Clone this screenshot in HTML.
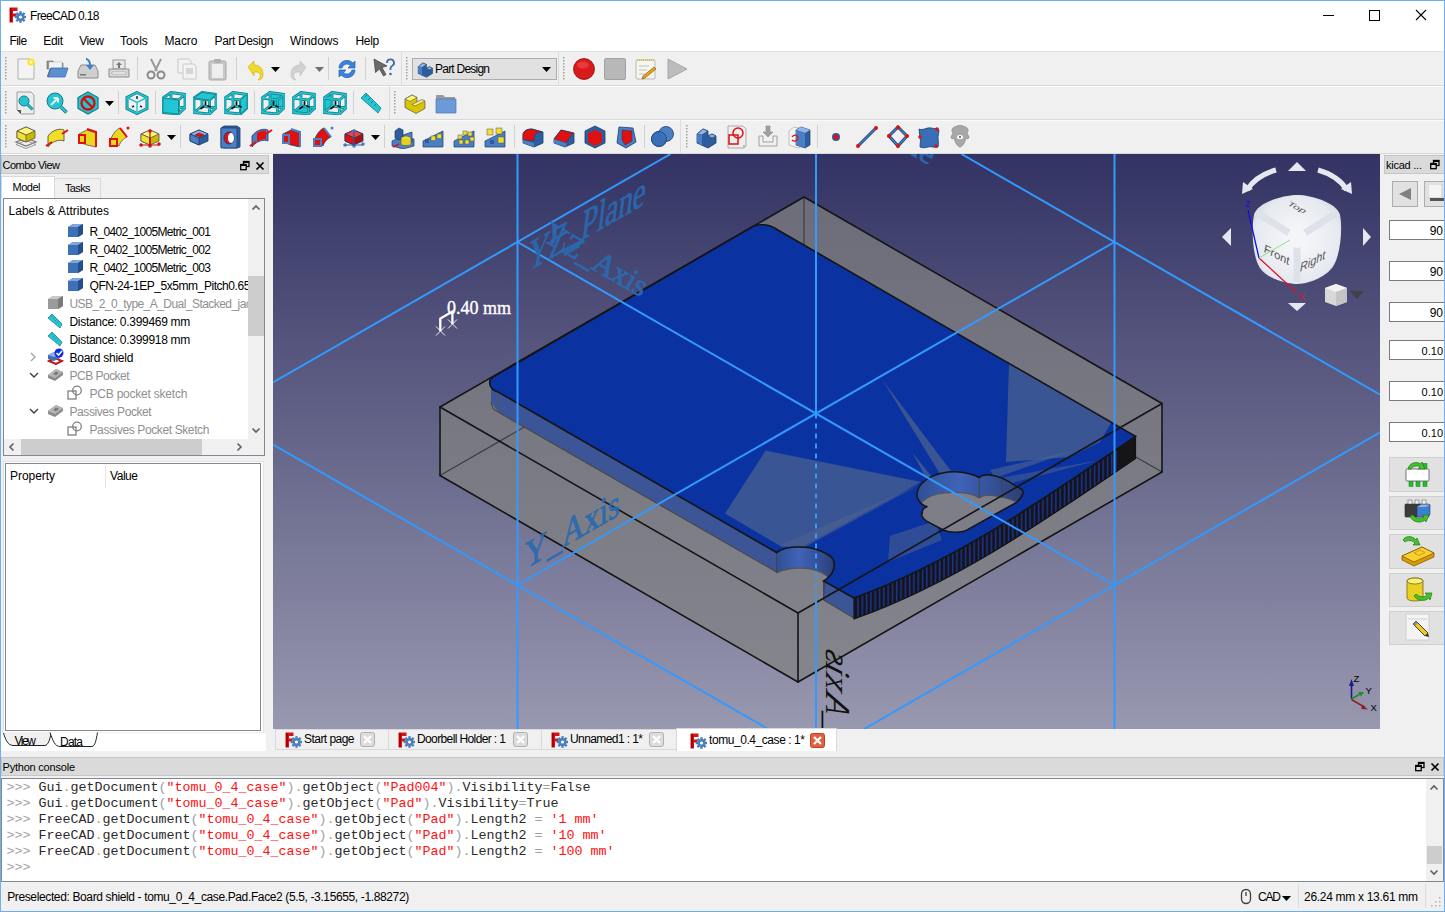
<!DOCTYPE html><html><head><meta charset="utf-8"><title>FreeCAD 0.18</title><style>
html,body{margin:0;padding:0}
body{width:1445px;height:912px;overflow:hidden;position:relative;background:#f0f0f0;font-family:"Liberation Sans",sans-serif;font-size:12px;color:#000}
svg{font-family:"Liberation Sans",sans-serif}
body>div{position:absolute;box-sizing:border-box}
.t{white-space:pre}
svg.tx{position:absolute;left:0;top:0;overflow:visible}
svg text{white-space:pre}
</style></head><body>
<div style="left:0px;top:0px;width:1445px;height:51px;background:#fff"></div>
<div style="left:0px;top:51px;width:1445px;height:1px;background:#e3e3e3"></div>
<svg style="position:absolute;left:9px;top:7px;" width="17" height="16" viewBox="0 0 17 16"><path d="M0.5 0.5h8v3.5h-4.5v2.5h3.5v3h-3.5v6h-3.5z" fill="#d3151b"/><path d="M1 1h2v14h-2z" fill="#a00"/><g transform="translate(11.5,10)"><circle r="4" fill="#4a7fc0"/><circle r="1.6" fill="#fff"/><rect x="-1.2" y="-5.8" width="2.4" height="2.6" fill="#4a7fc0" transform="rotate(0)"/><rect x="-1.2" y="-5.8" width="2.4" height="2.6" fill="#4a7fc0" transform="rotate(45)"/><rect x="-1.2" y="-5.8" width="2.4" height="2.6" fill="#4a7fc0" transform="rotate(90)"/><rect x="-1.2" y="-5.8" width="2.4" height="2.6" fill="#4a7fc0" transform="rotate(135)"/><rect x="-1.2" y="-5.8" width="2.4" height="2.6" fill="#4a7fc0" transform="rotate(180)"/><rect x="-1.2" y="-5.8" width="2.4" height="2.6" fill="#4a7fc0" transform="rotate(225)"/><rect x="-1.2" y="-5.8" width="2.4" height="2.6" fill="#4a7fc0" transform="rotate(270)"/><rect x="-1.2" y="-5.8" width="2.4" height="2.6" fill="#4a7fc0" transform="rotate(315)"/></g></svg>
<svg class="tx" width="1" height="1"><text x="30" y="20" font-size="12" fill="#000" textLength="69.5" lengthAdjust="spacing" >FreeCAD 0.18</text></svg>
<svg style="position:absolute;left:1318px;top:5px;" width="110" height="20" viewBox="0 0 110 20"><path d="M5 10.5h11" stroke="#000" stroke-width="1"/><rect x="51.5" y="5.5" width="10" height="10" fill="none" stroke="#000"/><path d="M98 5l10 10M108 5l-10 10" stroke="#000" stroke-width="1.1"/></svg>
<svg class="tx" width="1" height="1"><text x="9.5" y="45" font-size="12" fill="#000" textLength="17.6" lengthAdjust="spacing" >File</text></svg>
<svg class="tx" width="1" height="1"><text x="43.3" y="45" font-size="12" fill="#000" textLength="19.7" lengthAdjust="spacing" >Edit</text></svg>
<svg class="tx" width="1" height="1"><text x="79.2" y="45" font-size="12" fill="#000" textLength="24.6" lengthAdjust="spacing" >View</text></svg>
<svg class="tx" width="1" height="1"><text x="120.1" y="45" font-size="12" fill="#000" textLength="27.7" lengthAdjust="spacing" >Tools</text></svg>
<svg class="tx" width="1" height="1"><text x="164.4" y="45" font-size="12" fill="#000" textLength="33" lengthAdjust="spacing" >Macro</text></svg>
<svg class="tx" width="1" height="1"><text x="214.5" y="45" font-size="12" fill="#000" textLength="59" lengthAdjust="spacing" >Part Design</text></svg>
<svg class="tx" width="1" height="1"><text x="290" y="45" font-size="12" fill="#000" textLength="48.4" lengthAdjust="spacing" >Windows</text></svg>
<svg class="tx" width="1" height="1"><text x="355.5" y="45" font-size="12" fill="#000" textLength="23.7" lengthAdjust="spacing" >Help</text></svg>
<div style="left:0px;top:85px;width:1445px;height:1px;background:#d9d9d9"></div>
<div style="left:0px;top:86px;width:1445px;height:1px;background:#fafafa"></div>
<div style="left:0px;top:119px;width:1445px;height:1px;background:#d9d9d9"></div>
<div style="left:0px;top:120px;width:1445px;height:1px;background:#fafafa"></div>
<div style="left:0px;top:153px;width:1445px;height:1px;background:#d9d9d9"></div>
<div style="left:0px;top:154px;width:1445px;height:1px;background:#fafafa"></div>
<svg style="position:absolute;left:5px;top:57px;" width="2" height="24" viewBox="0 0 2 24"><rect x="0" y="0" width="1.5" height="1.5" fill="#a0a0a0"/><rect x="0" y="3" width="1.5" height="1.5" fill="#a0a0a0"/><rect x="0" y="6" width="1.5" height="1.5" fill="#a0a0a0"/><rect x="0" y="9" width="1.5" height="1.5" fill="#a0a0a0"/><rect x="0" y="12" width="1.5" height="1.5" fill="#a0a0a0"/><rect x="0" y="15" width="1.5" height="1.5" fill="#a0a0a0"/><rect x="0" y="18" width="1.5" height="1.5" fill="#a0a0a0"/><rect x="0" y="21" width="1.5" height="1.5" fill="#a0a0a0"/></svg>
<svg style="position:absolute;left:14px;top:57px;" width="24" height="24" viewBox="0 0 24 24"><path d="M4 2h12l4 4v16H4z" fill="#f4f4f4" stroke="#b0b0b0"/><circle cx="17" cy="5" r="3.5" fill="#ffe100" opacity="0.9"/><circle cx="17" cy="5" r="1.8" fill="#fffbc0"/></svg>
<svg style="position:absolute;left:45px;top:57px;" width="24" height="24" viewBox="0 0 24 24"><path d="M2 4h6l2 2h8v6H2z" fill="#8c8c8c" stroke="#6a6a6a" stroke-width="0.6"/><path d="M4 5h13v9H4z" fill="#f2f2f2" stroke="#bbb" stroke-width="0.5"/><path d="M2 4v15l3-8h18l-4 9H2z" fill="#6c6c6c"/><path d="M3 20l3-9h17l-3 9z" fill="#5b8fd0" stroke="#3d6eb0" stroke-width="0.8"/></svg>
<svg style="position:absolute;left:76px;top:57px;" width="24" height="24" viewBox="0 0 24 24"><path d="M2 14l3-6h14l3 6v7H2z" fill="#cfcfcf" stroke="#8a8a8a"/><rect x="4" y="17" width="6" height="1.5" fill="#777"/><path d="M12 3c-5 0-7 3-7 5h2c0-1.5 2-3 5-3v3l5-4-5-4z" fill="#3f7fd0" transform="rotate(90 12 8) translate(0,2)"/></svg>
<svg style="position:absolute;left:107px;top:57px;" width="24" height="24" viewBox="0 0 24 24"><rect x="6" y="3" width="12" height="9" fill="#e8e8e8" stroke="#999"/><path d="M12 5l-3 3h2v3h2V8h2z" fill="#777"/><path d="M2 12h20v8H2z" fill="#d8d8d8" stroke="#8c8c8c"/><rect x="5" y="15" width="14" height="2" fill="#fff" stroke="#999" stroke-width="0.6"/></svg>
<svg style="position:absolute;left:144px;top:57px;" width="24" height="24" viewBox="0 0 24 24"><path d="M7 2l6 12M17 2l-6 12" stroke="#9a9a9a" stroke-width="2"/><circle cx="7" cy="18" r="3.5" fill="none" stroke="#8a8a8a" stroke-width="2"/><circle cx="17" cy="18" r="3.5" fill="none" stroke="#8a8a8a" stroke-width="2"/></svg>
<svg style="position:absolute;left:175px;top:57px;" width="24" height="24" viewBox="0 0 24 24"><path d="M3 2h11l2 2v12H3z" fill="#f3f3f3" stroke="#c8c8c8"/><path d="M8 7h11l2 2v13H8z" fill="#f3f3f3" stroke="#c8c8c8"/><rect x="11" y="11" width="7" height="6" fill="#d5d5d5"/></svg>
<svg style="position:absolute;left:206px;top:57px;" width="24" height="24" viewBox="0 0 24 24"><rect x="3" y="4" width="17" height="19" rx="1.5" fill="#c8c8c8" stroke="#a8a8a8"/><rect x="6" y="7" width="11" height="14" fill="#eeeeee"/><rect x="8" y="2" width="7" height="4" rx="1" fill="#b0b0b0"/></svg>
<svg style="position:absolute;left:243px;top:57px;" width="24" height="24" viewBox="0 0 24 24"><path d="M5 10l6-6v4c6 0 9 4 9 9s-3 6-5 6c2-2 3-4 2-6-1-2-3-2-6-2v4z" fill="#f0d830" stroke="#c8b000" stroke-width="0.6"/></svg>
<svg style="position:absolute;left:287px;top:57px;" width="24" height="24" viewBox="0 0 24 24"><path d="M19 10l-6-6v4c-6 0-9 4-9 9s3 6 5 6c-2-2-3-4-2-6 1-2 3-2 6-2v4z" fill="#d0d0d0" stroke="#c0c0c0" stroke-width="0.6"/></svg>
<svg style="position:absolute;left:335px;top:57px;" width="24" height="24" viewBox="0 0 24 24"><path d="M4 11a8 8 0 0 1 14-5l2-2v7h-7l2.5-2.5A5 5 0 0 0 7 11z" fill="#3a83d8" stroke="#2563b0" stroke-width="0.7"/><path d="M20 13a8 8 0 0 1-14 5l-2 2v-7h7l-2.5 2.5A5 5 0 0 0 17 13z" fill="#3a83d8" stroke="#2563b0" stroke-width="0.7"/></svg>
<svg style="position:absolute;left:372px;top:57px;" width="24" height="24" viewBox="0 0 24 24"><path d="M2 2l13 7-5 1.5 4 7-2.5 1.5-4-7-4 3.5z" fill="#6a6a6a" stroke="#404040" stroke-width="0.7"/><path d="M15 6a3.5 3.5 0 1 1 5 3c-1 .7-1.5 1.3-1.5 2.5v1.5" fill="none" stroke="#3c6eb0" stroke-width="1.8"/><circle cx="18.5" cy="17" r="1.3" fill="#3c6eb0"/></svg>
<div style="left:137px;top:57px;width:1px;height:23px;background:#d0d0d0"></div>
<div style="left:236px;top:57px;width:1px;height:23px;background:#d0d0d0"></div>
<div style="left:328px;top:57px;width:1px;height:23px;background:#d0d0d0"></div>
<div style="left:365px;top:57px;width:1px;height:23px;background:#d0d0d0"></div>
<svg style="position:absolute;left:271px;top:67px" width="9" height="5" viewBox="0 0 9 5"><path d="M0 0h9l-4.5 5z" fill="#000"/></svg>
<svg style="position:absolute;left:315px;top:67px" width="9" height="5" viewBox="0 0 9 5"><path d="M0 0h9l-4.5 5z" fill="#707070"/></svg>
<div style="left:401px;top:52px;width:1px;height:33px;background:#dcdcdc"></div>
<svg style="position:absolute;left:406px;top:57px;" width="2" height="24" viewBox="0 0 2 24"><rect x="0" y="0" width="1.5" height="1.5" fill="#a0a0a0"/><rect x="0" y="3" width="1.5" height="1.5" fill="#a0a0a0"/><rect x="0" y="6" width="1.5" height="1.5" fill="#a0a0a0"/><rect x="0" y="9" width="1.5" height="1.5" fill="#a0a0a0"/><rect x="0" y="12" width="1.5" height="1.5" fill="#a0a0a0"/><rect x="0" y="15" width="1.5" height="1.5" fill="#a0a0a0"/><rect x="0" y="18" width="1.5" height="1.5" fill="#a0a0a0"/><rect x="0" y="21" width="1.5" height="1.5" fill="#a0a0a0"/></svg>
<div style="left:412px;top:58px;width:145px;height:22px;background:#e1e1e1;border:1px solid #adadad"></div>
<svg style="position:absolute;left:416px;top:60px;" width="18" height="18" viewBox="0 0 24 24"><path d="M3 9l6-5 5 2v5l4-2 4 2v7l-8 5-11-5z" fill="#2d5d9f" stroke="#1c3c6c" stroke-width="0.8"/><path d="M3 9l6-5 5 2-6 4zM14 11l4-2 4 2-4 2z" fill="#8fb4e6" stroke="#1c3c6c" stroke-width="0.6"/><path d="M3 9l5 1v11l-5-4z" fill="#4a7fc4"/></svg>
<svg class="tx" width="1" height="1"><text x="435" y="73" font-size="12" fill="#000" textLength="55" lengthAdjust="spacing" >Part Design</text></svg>
<svg style="position:absolute;left:542px;top:67px" width="9" height="5" viewBox="0 0 9 5"><path d="M0 0h9l-4.5 5z" fill="#000"/></svg>
<div style="left:558px;top:52px;width:1px;height:33px;background:#dcdcdc"></div>
<svg style="position:absolute;left:563px;top:57px;" width="2" height="24" viewBox="0 0 2 24"><rect x="0" y="0" width="1.5" height="1.5" fill="#a0a0a0"/><rect x="0" y="3" width="1.5" height="1.5" fill="#a0a0a0"/><rect x="0" y="6" width="1.5" height="1.5" fill="#a0a0a0"/><rect x="0" y="9" width="1.5" height="1.5" fill="#a0a0a0"/><rect x="0" y="12" width="1.5" height="1.5" fill="#a0a0a0"/><rect x="0" y="15" width="1.5" height="1.5" fill="#a0a0a0"/><rect x="0" y="18" width="1.5" height="1.5" fill="#a0a0a0"/><rect x="0" y="21" width="1.5" height="1.5" fill="#a0a0a0"/></svg>
<svg style="position:absolute;left:572px;top:57px;" width="24" height="24" viewBox="0 0 24 24"><circle cx="12" cy="12" r="10.5" fill="#d91a1a" stroke="#8a0c0c" stroke-width="0.8"/><ellipse cx="11" cy="8" rx="6" ry="3.5" fill="#f05050" opacity="0.6"/></svg>
<svg style="position:absolute;left:603px;top:57px;" width="24" height="24" viewBox="0 0 24 24"><rect x="1.5" y="1.5" width="21" height="21" rx="1.5" fill="#b8b8b8" stroke="#a0a0a0"/></svg>
<svg style="position:absolute;left:634px;top:57px;" width="24" height="24" viewBox="0 0 24 24"><rect x="2" y="3" width="19" height="19" rx="1" fill="#f6f6f0" stroke="#b8b8b0"/><path d="M3 3h17" stroke="#d8c050" stroke-width="2" stroke-dasharray="1,1"/><path d="M5 9h10M5 13h8M5 17h6" stroke="#c0c0c0"/><path d="M9 19l11-9 2 2-11 9-3 1z" fill="#e8a020" stroke="#8a5000" stroke-width="0.6"/></svg>
<svg style="position:absolute;left:665px;top:57px;" width="24" height="24" viewBox="0 0 24 24"><path d="M3 2l19 10-19 10z" fill="#bcbcbc" stroke="#a8a8a8"/></svg>
<svg style="position:absolute;left:5px;top:91px;" width="2" height="24" viewBox="0 0 2 24"><rect x="0" y="0" width="1.5" height="1.5" fill="#a0a0a0"/><rect x="0" y="3" width="1.5" height="1.5" fill="#a0a0a0"/><rect x="0" y="6" width="1.5" height="1.5" fill="#a0a0a0"/><rect x="0" y="9" width="1.5" height="1.5" fill="#a0a0a0"/><rect x="0" y="12" width="1.5" height="1.5" fill="#a0a0a0"/><rect x="0" y="15" width="1.5" height="1.5" fill="#a0a0a0"/><rect x="0" y="18" width="1.5" height="1.5" fill="#a0a0a0"/><rect x="0" y="21" width="1.5" height="1.5" fill="#a0a0a0"/></svg>
<svg style="position:absolute;left:14px;top:91px;" width="24" height="24" viewBox="0 0 24 24"><path d="M3 1h14l3 3v19H7l-4-4z" fill="#ececec" stroke="#8a8a8a" stroke-width="0.8"/><path d="M3 19l4 4v-4z" fill="#555"/><circle cx="10" cy="10" r="5" fill="#22c6d2" stroke="#137c86"/><path d="M13.5 13.5l5 5" stroke="#137c86" stroke-width="3"/><path d="M13.5 13.5l5 5" stroke="#22c6d2" stroke-width="1.6"/></svg>
<svg style="position:absolute;left:45px;top:91px;" width="24" height="24" viewBox="0 0 24 24"><circle cx="10" cy="10" r="8" fill="#22c6d2" stroke="#137c86"/><path d="M15.5 15.5l6 6" stroke="#137c86" stroke-width="3.5"/><path d="M15.5 15.5l6 6" stroke="#22c6d2" stroke-width="2"/><path d="M6 14l7-7M13 7h-4.5M13 7v4.5" stroke="#eee" stroke-width="2"/></svg>
<svg style="position:absolute;left:76px;top:91px;" width="24" height="24" viewBox="0 0 24 24"><path d="M12 1l10 5.5v11L12 23 2 17.5v-11z" fill="#22c6d2" stroke="#137c86" stroke-width="1.2"/><circle cx="12" cy="12" r="6.5" fill="none" stroke="#d01010" stroke-width="2.3"/><path d="M7.5 7.5l9 9" stroke="#d01010" stroke-width="2.3"/></svg>
<svg style="position:absolute;left:125px;top:91px;" width="24" height="24" viewBox="0 0 24 24"><path d="M12 1.5l10 5v11l-10 5-10-5v-11z" fill="none" stroke="#137c86" stroke-width="3"/><path d="M12 1.5l10 5v11l-10 5-10-5v-11zM2 6.5l10 5 10-5M12 11.5v11" fill="none" stroke="#22c6d2" stroke-width="1.4"/><path d="M12 5v3M7 16l2-1M17 16l-2-1" stroke="#222" stroke-width="1.5"/></svg>
<svg style="position:absolute;left:162px;top:91px;" width="24" height="24" viewBox="0 0 24 24"><path d="M1,7 L16.5,9 L16.5,23 L1,21.5 Z M9,1.5 L23,3.5 L23,17 L9,15 Z M1,7 L9,1.5 M16.5,9 L23,3.5 M16.5,23 L23,17 M1,21.5 L9,15" fill="none" stroke="#137c86" stroke-width="2.8" stroke-linejoin="round"/><path d="M1,7 L16.5,9 L16.5,23 L1,21.5 Z M9,1.5 L23,3.5 L23,17 L9,15 Z M1,7 L9,1.5 M16.5,9 L23,3.5 M16.5,23 L23,17 M1,21.5 L9,15" fill="none" stroke="#22c6d2" stroke-width="1.4" stroke-linejoin="round"/><polygon points="1,7 16.5,9 16.5,23 1,21.5" fill="#22c6d2" stroke="#137c86" stroke-width="0.8"/></svg>
<svg style="position:absolute;left:193px;top:91px;" width="24" height="24" viewBox="0 0 24 24"><path d="M1,7 L16.5,9 L16.5,23 L1,21.5 Z M9,1.5 L23,3.5 L23,17 L9,15 Z M1,7 L9,1.5 M16.5,9 L23,3.5 M16.5,23 L23,17 M1,21.5 L9,15" fill="none" stroke="#137c86" stroke-width="2.8" stroke-linejoin="round"/><path d="M1,7 L16.5,9 L16.5,23 L1,21.5 Z M9,1.5 L23,3.5 L23,17 L9,15 Z M1,7 L9,1.5 M16.5,9 L23,3.5 M16.5,23 L23,17 M1,21.5 L9,15" fill="none" stroke="#22c6d2" stroke-width="1.4" stroke-linejoin="round"/><polygon points="1,7 16.5,9 23,3.5 9,1.5" fill="#22c6d2" stroke="#137c86" stroke-width="0.8"/><path d="M12.5 11v2.5M8 17.5l2.5-1.8M15 15l2 0.8" stroke="#111" stroke-width="1.8" stroke-linecap="round"/></svg>
<svg style="position:absolute;left:224px;top:91px;" width="24" height="24" viewBox="0 0 24 24"><path d="M1,7 L16.5,9 L16.5,23 L1,21.5 Z M9,1.5 L23,3.5 L23,17 L9,15 Z M1,7 L9,1.5 M16.5,9 L23,3.5 M16.5,23 L23,17 M1,21.5 L9,15" fill="none" stroke="#137c86" stroke-width="2.8" stroke-linejoin="round"/><path d="M1,7 L16.5,9 L16.5,23 L1,21.5 Z M9,1.5 L23,3.5 L23,17 L9,15 Z M1,7 L9,1.5 M16.5,9 L23,3.5 M16.5,23 L23,17 M1,21.5 L9,15" fill="none" stroke="#22c6d2" stroke-width="1.4" stroke-linejoin="round"/><polygon points="16.5,9 23,3.5 23,17 16.5,23" fill="#22c6d2" stroke="#137c86" stroke-width="0.8"/><path d="M12.5 11v2.5M8 17.5l2.5-1.8M15 15l2 0.8" stroke="#111" stroke-width="1.8" stroke-linecap="round"/></svg>
<svg style="position:absolute;left:261px;top:91px;" width="24" height="24" viewBox="0 0 24 24"><polygon points="9,1.5 23,3.5 23,17 9,15" fill="#22c6d2"/><path d="M1,7 L16.5,9 L16.5,23 L1,21.5 Z M9,1.5 L23,3.5 L23,17 L9,15 Z M1,7 L9,1.5 M16.5,9 L23,3.5 M16.5,23 L23,17 M1,21.5 L9,15" fill="none" stroke="#137c86" stroke-width="2.8" stroke-linejoin="round"/><path d="M1,7 L16.5,9 L16.5,23 L1,21.5 Z M9,1.5 L23,3.5 L23,17 L9,15 Z M1,7 L9,1.5 M16.5,9 L23,3.5 M16.5,23 L23,17 M1,21.5 L9,15" fill="none" stroke="#22c6d2" stroke-width="1.4" stroke-linejoin="round"/><path d="M12.5 11v2.5M8 17.5l2.5-1.8M15 15l2 0.8" stroke="#111" stroke-width="1.8" stroke-linecap="round"/></svg>
<svg style="position:absolute;left:292px;top:91px;" width="24" height="24" viewBox="0 0 24 24"><polygon points="1,21.5 16.5,23 23,17 9,15" fill="#22c6d2"/><path d="M1,7 L16.5,9 L16.5,23 L1,21.5 Z M9,1.5 L23,3.5 L23,17 L9,15 Z M1,7 L9,1.5 M16.5,9 L23,3.5 M16.5,23 L23,17 M1,21.5 L9,15" fill="none" stroke="#137c86" stroke-width="2.8" stroke-linejoin="round"/><path d="M1,7 L16.5,9 L16.5,23 L1,21.5 Z M9,1.5 L23,3.5 L23,17 L9,15 Z M1,7 L9,1.5 M16.5,9 L23,3.5 M16.5,23 L23,17 M1,21.5 L9,15" fill="none" stroke="#22c6d2" stroke-width="1.4" stroke-linejoin="round"/><path d="M12.5 11v2.5M8 17.5l2.5-1.8M15 15l2 0.8" stroke="#111" stroke-width="1.8" stroke-linecap="round"/></svg>
<svg style="position:absolute;left:323px;top:91px;" width="24" height="24" viewBox="0 0 24 24"><polygon points="1,7 9,1.5 9,15 1,21.5" fill="#22c6d2"/><path d="M1,7 L16.5,9 L16.5,23 L1,21.5 Z M9,1.5 L23,3.5 L23,17 L9,15 Z M1,7 L9,1.5 M16.5,9 L23,3.5 M16.5,23 L23,17 M1,21.5 L9,15" fill="none" stroke="#137c86" stroke-width="2.8" stroke-linejoin="round"/><path d="M1,7 L16.5,9 L16.5,23 L1,21.5 Z M9,1.5 L23,3.5 L23,17 L9,15 Z M1,7 L9,1.5 M16.5,9 L23,3.5 M16.5,23 L23,17 M1,21.5 L9,15" fill="none" stroke="#22c6d2" stroke-width="1.4" stroke-linejoin="round"/><path d="M12.5 11v2.5M8 17.5l2.5-1.8M15 15l2 0.8" stroke="#111" stroke-width="1.8" stroke-linecap="round"/></svg>
<svg style="position:absolute;left:359px;top:91px;" width="24" height="24" viewBox="0 0 24 24"><path d="M2 7l5-5 15 15-3 5z" fill="#22c6d2" stroke="#137c86" stroke-width="0.8"/><path d="M6 6l2-2M9 9l2-2M12 12l2-2M15 15l2-2" stroke="#137c86"/></svg>
<svg style="position:absolute;left:105px;top:101px" width="9" height="5" viewBox="0 0 9 5"><path d="M0 0h9l-4.5 5z" fill="#000"/></svg>
<div style="left:118px;top:91px;width:1px;height:23px;background:#d0d0d0"></div>
<div style="left:155px;top:91px;width:1px;height:23px;background:#d0d0d0"></div>
<div style="left:254px;top:91px;width:1px;height:23px;background:#d0d0d0"></div>
<div style="left:353px;top:91px;width:1px;height:23px;background:#d0d0d0"></div>
<div style="left:389px;top:86px;width:1px;height:33px;background:#dcdcdc"></div>
<svg style="position:absolute;left:394px;top:91px;" width="2" height="24" viewBox="0 0 2 24"><rect x="0" y="0" width="1.5" height="1.5" fill="#a0a0a0"/><rect x="0" y="3" width="1.5" height="1.5" fill="#a0a0a0"/><rect x="0" y="6" width="1.5" height="1.5" fill="#a0a0a0"/><rect x="0" y="9" width="1.5" height="1.5" fill="#a0a0a0"/><rect x="0" y="12" width="1.5" height="1.5" fill="#a0a0a0"/><rect x="0" y="15" width="1.5" height="1.5" fill="#a0a0a0"/><rect x="0" y="18" width="1.5" height="1.5" fill="#a0a0a0"/><rect x="0" y="21" width="1.5" height="1.5" fill="#a0a0a0"/></svg>
<svg style="position:absolute;left:403px;top:91px;" width="24" height="24" viewBox="0 0 24 24"><path d="M2 8l7-4 5 2.5v5l5-2.5 3 1.5v7l-9 5-11-6z" fill="#d8c400" stroke="#555" stroke-width="0.7"/><path d="M2 8l7-4 5 2.5-7 4z" fill="#fff27a" stroke="#555" stroke-width="0.6"/><path d="M9 13.5l10-5 3 1.5-10 5z" fill="#fff27a" stroke="#555" stroke-width="0.6"/></svg>
<svg style="position:absolute;left:434px;top:91px;" width="24" height="24" viewBox="0 0 24 24"><path d="M2 4h7l2 2h10v15H2z" fill="#9a9a9a"/><path d="M2 8h20v14H2z" fill="#6c9ad8" stroke="#4c7ab8" stroke-width="0.7"/></svg>
<svg style="position:absolute;left:5px;top:125px;" width="2" height="24" viewBox="0 0 2 24"><rect x="0" y="0" width="1.5" height="1.5" fill="#a0a0a0"/><rect x="0" y="3" width="1.5" height="1.5" fill="#a0a0a0"/><rect x="0" y="6" width="1.5" height="1.5" fill="#a0a0a0"/><rect x="0" y="9" width="1.5" height="1.5" fill="#a0a0a0"/><rect x="0" y="12" width="1.5" height="1.5" fill="#a0a0a0"/><rect x="0" y="15" width="1.5" height="1.5" fill="#a0a0a0"/><rect x="0" y="18" width="1.5" height="1.5" fill="#a0a0a0"/><rect x="0" y="21" width="1.5" height="1.5" fill="#a0a0a0"/></svg>
<svg style="position:absolute;left:14px;top:125px;" width="24" height="24" viewBox="0 0 24 24"><path d="M2 17l10-4 10 4-10 4z" fill="none" stroke="#777" stroke-width="1.2"/><path d="M2 19.5l10-4 10 4-10 4z" fill="none" stroke="#999" stroke-width="1"/><g transform="translate(0,-3)"><path d="M3 9l9-4 9 4v7l-9 4-9-4z" fill="#c9b800" stroke="#555" stroke-width="0.8"/><path d="M3 9l9-4 9 4-9 4z" fill="#fff57a" stroke="#555" stroke-width="0.8"/><path d="M3 9l9 4v7l-9-4z" fill="#f2e230" stroke="#555" stroke-width="0.8"/></g></svg>
<svg style="position:absolute;left:45px;top:125px;" width="24" height="24" viewBox="0 0 24 24"><path d="M3 11c4-6 12-8 16-6v11c-4-2-12 0-16 6z" fill="#f0de28" stroke="#444" stroke-width="0.8"/><path d="M1 21l6-4M17 9l6-4" stroke="#e01010" stroke-width="2"/></svg>
<svg style="position:absolute;left:76px;top:125px;" width="24" height="24" viewBox="0 0 24 24"><path d="M3 9l8-4 9 3v14l-9-2-8-3z" fill="#e8d820" stroke="#555" stroke-width="0.8"/><rect x="3" y="10" width="6" height="8" fill="none" stroke="#e01010" stroke-width="2"/><path d="M11 4l9 3v15" fill="none" stroke="#e01010" stroke-width="2"/></svg>
<svg style="position:absolute;left:107px;top:125px;" width="24" height="24" viewBox="0 0 24 24"><path d="M4 14c2-6 6-10 9-11l7 9c-3 1-7 5-8 9z" fill="#e8d820" stroke="#555" stroke-width="0.8"/><path d="M13 3l7 9" stroke="#e01010" stroke-width="2"/><rect x="3" y="14" width="7" height="7" fill="#e8d820" stroke="#e01010" stroke-width="2"/><circle cx="21" cy="3" r="1.5" fill="#e01010"/></svg>
<svg style="position:absolute;left:138px;top:125px;" width="24" height="24" viewBox="0 0 24 24"><path d="M3 9l9-4 9 4v7l-9 4-9-4z" fill="#c9b800" stroke="#555" stroke-width="0.8"/><path d="M3 9l9-4 9 4-9 4z" fill="#fff57a" stroke="#555" stroke-width="0.8"/><path d="M3 9l9 4v7l-9-4z" fill="#f2e230" stroke="#555" stroke-width="0.8"/><path d="M12 13v7M12 13h0" stroke="#c01010" stroke-width="1.5"/><circle cx="12" cy="6" r="1.8" fill="#e01010"/><circle cx="3" cy="20" r="1.8" fill="#e01010"/><circle cx="12" cy="21" r="1.8" fill="#e01010"/><circle cx="21" cy="19" r="1.8" fill="#e01010"/><path d="M12 6v15M3 20h18" stroke="#c01010" stroke-width="1.2"/></svg>
<svg style="position:absolute;left:187px;top:125px;" width="24" height="24" viewBox="0 0 24 24"><path d="M3 9l9-4 9 4v7l-9 4-9-4z" fill="#2d5d9f" stroke="#1c3c6c" stroke-width="0.8"/><path d="M3 9l9-4 9 4-9 4z" fill="#8fb4e6" stroke="#1c3c6c" stroke-width="0.8"/><path d="M3 9l9 4v7l-9-4z" fill="#4a7fc4" stroke="#1c3c6c" stroke-width="0.8"/><path d="M8 10l4-2 5 2-4 2z" fill="#e01010" stroke="#900" stroke-width="0.6"/></svg>
<svg style="position:absolute;left:218px;top:125px;" width="24" height="24" viewBox="0 0 24 24"><path d="M3 3l3-2h13l3 2v19l-3 1H6l-3-1z" fill="#2d5d9f" stroke="#1c3c6c" stroke-width="0.8"/><path d="M3 3h16v20H3z" fill="#4a7fc4" stroke="#1c3c6c" stroke-width="0.8"/><ellipse cx="11" cy="13" rx="5" ry="6" fill="#e01010" stroke="#1c3c6c"/><ellipse cx="13" cy="13" rx="3" ry="5" fill="#fff"/></svg>
<svg style="position:absolute;left:249px;top:125px;" width="24" height="24" viewBox="0 0 24 24"><path d="M3 11c4-6 12-8 16-6v11c-4-2-12 0-16 6z" fill="#4a7fc4" stroke="#1c3c6c" stroke-width="0.8"/><path d="M8 8c3-2 7-3 9-2v8c-3 0-6 1-9 3z" fill="#e01010"/><path d="M1 21l6-4M17 9l6-4" stroke="#e01010" stroke-width="2"/></svg>
<svg style="position:absolute;left:280px;top:125px;" width="24" height="24" viewBox="0 0 24 24"><path d="M3 9l8-4 9 3v14l-9-2-8-3z" fill="#e01010" stroke="#1c3c6c" stroke-width="0.8"/><rect x="3" y="10" width="6" height="8" fill="#e01010" stroke="#4a7fc4" stroke-width="2"/><path d="M11 4l9 3v15" fill="none" stroke="#4a7fc4" stroke-width="2"/></svg>
<svg style="position:absolute;left:311px;top:125px;" width="24" height="24" viewBox="0 0 24 24"><path d="M4 14c2-6 6-10 9-11l7 9c-3 1-7 5-8 9z" fill="#e01010" stroke="#1c3c6c" stroke-width="0.8"/><path d="M13 3l7 9" stroke="#4a7fc4" stroke-width="2"/><rect x="3" y="14" width="7" height="7" fill="#e01010" stroke="#4a7fc4" stroke-width="2"/><circle cx="21" cy="3" r="1.5" fill="#4a7fc4"/></svg>
<svg style="position:absolute;left:342px;top:125px;" width="24" height="24" viewBox="0 0 24 24"><path d="M3 9l9-4 9 4v7l-9 4-9-4z" fill="#b00c0c" stroke="#1c3c6c" stroke-width="0.8"/><path d="M3 9l9-4 9 4-9 4z" fill="#f04040" stroke="#1c3c6c" stroke-width="0.8"/><path d="M3 9l9 4v7l-9-4z" fill="#e01010" stroke="#1c3c6c" stroke-width="0.8"/><circle cx="12" cy="6" r="1.8" fill="#4a7fc4"/><circle cx="3" cy="20" r="1.8" fill="#4a7fc4"/><circle cx="12" cy="21" r="1.8" fill="#4a7fc4"/><circle cx="21" cy="19" r="1.8" fill="#4a7fc4"/><path d="M12 6v15M3 20h18" stroke="#2d5d9f" stroke-width="1.2"/></svg>
<svg style="position:absolute;left:391px;top:125px;" width="24" height="24" viewBox="0 0 24 24"><path d="M1 16l10-5 12 3v7l-11 3-11-3z" fill="#4a7fc4" stroke="#1c3c6c" stroke-width="0.7"/><path d="M4 6l4-3 4 2v8l-4 2-4-2z" fill="#2d5d9f" stroke="#1c3c6c" stroke-width="0.7"/><path d="M12 10l9-3v10l-9 3z" fill="#4a7fc4" stroke="#1c3c6c" stroke-width="0.7"/><ellipse cx="15" cy="14" rx="5" ry="3" fill="#f0de28" stroke="#555" stroke-width="0.6"/><path d="M10 14v5c0 2 10 2 10 0v-5" fill="#e8d020" stroke="#555" stroke-width="0.6"/><path d="M2 22l6-3" stroke="#e01010" stroke-width="1.5"/></svg>
<svg style="position:absolute;left:422px;top:125px;" width="24" height="24" viewBox="0 0 24 24"><path d="M1 16l20-10v16H1z" fill="#4a7fc4" stroke="#1c3c6c" stroke-width="0.7"/><rect x="3" y="14" width="4" height="4" fill="#2d5d9f"/><rect x="9" y="11" width="4.5" height="4.5" fill="#f0de28" stroke="#555" stroke-width="0.5"/><rect x="15" y="9" width="4.5" height="4.5" fill="#f0de28" stroke="#555" stroke-width="0.5"/></svg>
<svg style="position:absolute;left:453px;top:125px;" width="24" height="24" viewBox="0 0 24 24"><path d="M1 16l20-10v16H1z" fill="#4a7fc4" stroke="#1c3c6c" stroke-width="0.7"/><rect x="5" y="10" width="4" height="4" fill="#f0de28" stroke="#555" stroke-width="0.5"/><rect x="10" y="6" width="4" height="4" fill="#f0de28" stroke="#555" stroke-width="0.5"/><rect x="15" y="7" width="4" height="4" fill="#f0de28" stroke="#555" stroke-width="0.5"/><rect x="17" y="12" width="4" height="4" fill="#f0de28" stroke="#555" stroke-width="0.5"/><rect x="12" y="15" width="4" height="4" fill="#f0de28" stroke="#555" stroke-width="0.5"/><rect x="6" y="15" width="4" height="4" fill="#f0de28" stroke="#555" stroke-width="0.5"/></svg>
<svg style="position:absolute;left:484px;top:125px;" width="24" height="24" viewBox="0 0 24 24"><path d="M1 16l20-10v16H1z" fill="#4a7fc4" stroke="#1c3c6c" stroke-width="0.7"/><rect x="3" y="4" width="6" height="6" fill="#f0de28" stroke="#555" stroke-width="0.5"/><rect x="12" y="3" width="6" height="6" fill="#f0de28" stroke="#555" stroke-width="0.5"/><rect x="14" y="12" width="6" height="6" fill="#f0de28" stroke="#555" stroke-width="0.5"/><rect x="6" y="15" width="4" height="4" fill="#2d5d9f"/></svg>
<svg style="position:absolute;left:521px;top:125px;" width="24" height="24" viewBox="0 0 24 24"><path d="M2 10c0-4 4-6 9-6l11 3v11l-9 4-11-4z" fill="#2d5d9f" stroke="#1c3c6c" stroke-width="0.8"/><path d="M2 10c0-4 4-6 9-6l10 3c-5 0-8 2-8 6v3L2 15z" fill="#e01010" stroke="#1c3c6c" stroke-width="0.6"/><path d="M2 15l11 3v4L2 18z" fill="#4a7fc4"/></svg>
<svg style="position:absolute;left:552px;top:125px;" width="24" height="24" viewBox="0 0 24 24"><path d="M2 14l7-9 13 3v10l-9 4-11-4z" fill="#2d5d9f" stroke="#1c3c6c" stroke-width="0.8"/><path d="M2 14l7-9 12 3-7 10z" fill="#e01010" stroke="#1c3c6c" stroke-width="0.6"/><path d="M2 14l12 4v4L2 18z" fill="#4a7fc4"/></svg>
<svg style="position:absolute;left:583px;top:125px;" width="24" height="24" viewBox="0 0 24 24"><path d="M12 1l10 5v12l-10 5-10-5V6z" fill="#2d5d9f" stroke="#1c3c6c" stroke-width="0.8"/><path d="M5 8l7 3v10l-7-4z" fill="#e01010"/><path d="M12 11l7-3v9l-7 4z" fill="#e01010"/><path d="M5 8l7-3 7 3-7 3z" fill="#e01010"/></svg>
<svg style="position:absolute;left:614px;top:125px;" width="24" height="24" viewBox="0 0 24 24"><path d="M5 2l14 1 3 14-10 6-9-5z" fill="#4a7fc4" stroke="#1c3c6c" stroke-width="0.8"/><path d="M8 5l10 1v10l-7 4-3-5z" fill="#e01010" stroke="#1c3c6c" stroke-width="0.6"/></svg>
<svg style="position:absolute;left:650px;top:125px;" width="24" height="24" viewBox="0 0 24 24"><circle cx="9" cy="14" r="7.5" fill="#3a6fb8" stroke="#1c3c6c" stroke-width="0.8"/><circle cx="16" cy="9" r="7.5" fill="#4a7fc4" stroke="#1c3c6c" stroke-width="0.8"/><circle cx="9" cy="14" r="7.5" fill="#3a6fb8" stroke="#1c3c6c" stroke-width="0.8" opacity="0.85"/></svg>
<svg style="position:absolute;left:694px;top:125px;" width="24" height="24" viewBox="0 0 24 24"><path d="M3 9l6-5 5 2v5l4-2 4 2v7l-8 5-11-5z" fill="#2d5d9f" stroke="#1c3c6c" stroke-width="0.8"/><path d="M3 9l6-5 5 2-6 4zM14 11l4-2 4 2-4 2z" fill="#8fb4e6" stroke="#1c3c6c" stroke-width="0.6"/><path d="M3 9l5 1v11l-5-4z" fill="#4a7fc4"/></svg>
<svg style="position:absolute;left:725px;top:125px;" width="24" height="24" viewBox="0 0 24 24"><path d="M3 1h15l3 3v17l-2 2H3z" fill="#eeeeee" stroke="#999" stroke-width="0.8"/><rect x="4" y="10" width="9" height="9" fill="none" stroke="#e01010" stroke-width="1.5"/><circle cx="13" cy="8" r="5" fill="none" stroke="#e01010" stroke-width="1.5"/><path d="M18 23l3-3h-3z" fill="#bbb"/></svg>
<svg style="position:absolute;left:756px;top:125px;" width="24" height="24" viewBox="0 0 24 24"><path d="M10 1h4v6h3l-5 5-5-5h3z" fill="#a0a0a0" stroke="#888" stroke-width="0.6"/><path d="M3 11h4v6h10v-6h4v10H3z" fill="#f0f0f0" stroke="#a0a0a0"/></svg>
<svg style="position:absolute;left:787px;top:125px;" width="24" height="24" viewBox="0 0 24 24"><path d="M2 6l5-4 9 2v17l-5 2-9-3z" fill="#f4f4f4" stroke="#aaa" stroke-width="0.7"/><path d="M9 5l5-3 9 3v15l-5 3-9-3z" fill="#2d5d9f" stroke="#1c3c6c" stroke-width="0.7"/><path d="M9 5l5-3 9 3-5 3z" fill="#8fb4e6"/><path d="M9 5l9 3v15l-9-3z" fill="#4a7fc4"/><path d="M5 12c2-3 6-2 6 1s-4 4-6 2" fill="none" stroke="#e01010" stroke-width="1.2"/></svg>
<svg style="position:absolute;left:824px;top:125px;" width="24" height="24" viewBox="0 0 24 24"><circle cx="12" cy="12" r="4" fill="#2d5d9f"/><circle cx="12" cy="12" r="2.5" fill="#e01010"/></svg>
<svg style="position:absolute;left:855px;top:125px;" width="24" height="24" viewBox="0 0 24 24"><path d="M3 21L21 3" stroke="#1c3c6c" stroke-width="3"/><path d="M3 21L21 3" stroke="#4a7fc4" stroke-width="1.5"/><circle cx="3" cy="21" r="2" fill="#e01010"/><circle cx="21" cy="3" r="2" fill="#e01010"/></svg>
<svg style="position:absolute;left:886px;top:125px;" width="24" height="24" viewBox="0 0 24 24"><path d="M12 2l9 9-9 10-9-10z" fill="none" stroke="#1c3c6c" stroke-width="3"/><path d="M12 2l9 9-9 10-9-10z" fill="none" stroke="#4a7fc4" stroke-width="1.5"/><circle cx="12" cy="2.5" r="2" fill="#e01010"/><circle cx="21" cy="11" r="2" fill="#e01010"/><circle cx="12" cy="21" r="2" fill="#e01010"/><circle cx="3" cy="11" r="2" fill="#e01010"/></svg>
<svg style="position:absolute;left:917px;top:125px;" width="24" height="24" viewBox="0 0 24 24"><path d="M2 4c4 2 8-2 12-1s7 0 8 2l-1 7c0 4 1 7 0 10-3 1-7-1-10 0s-6 1-8 0c0-4 1-6 0-9z" fill="#3a6fb8" stroke="#1c3c6c" stroke-width="0.8"/><circle cx="20" cy="4" r="1.8" fill="#e01010"/><circle cx="3" cy="12" r="1.8" fill="#e01010"/><circle cx="19" cy="21" r="1.8" fill="#e01010"/></svg>
<svg style="position:absolute;left:948px;top:125px;" width="24" height="24" viewBox="0 0 24 24"><path d="M5 8c-2-2-1-6 2-6 2-2 8-2 10 0 3 0 4 4 2 6l2 4c0 2-2 2-3 1-1 5-4 9-6 9s-5-4-6-9c-1 1-3 1-3-1z" fill="#a8a8a8" stroke="#888" stroke-width="0.7"/><ellipse cx="12" cy="12" rx="3" ry="2" fill="#fff"/><circle cx="12" cy="12" r="1" fill="#555"/></svg>
<svg style="position:absolute;left:167px;top:135px" width="9" height="5" viewBox="0 0 9 5"><path d="M0 0h9l-4.5 5z" fill="#000"/></svg>
<svg style="position:absolute;left:371px;top:135px" width="9" height="5" viewBox="0 0 9 5"><path d="M0 0h9l-4.5 5z" fill="#000"/></svg>
<div style="left:180px;top:125px;width:1px;height:23px;background:#d0d0d0"></div>
<div style="left:384px;top:125px;width:1px;height:23px;background:#d0d0d0"></div>
<div style="left:514px;top:125px;width:1px;height:23px;background:#d0d0d0"></div>
<div style="left:644px;top:125px;width:1px;height:23px;background:#d0d0d0"></div>
<div style="left:817px;top:125px;width:1px;height:23px;background:#d0d0d0"></div>
<div style="left:680px;top:120px;width:1px;height:33px;background:#dcdcdc"></div>
<svg style="position:absolute;left:686px;top:125px;" width="2" height="24" viewBox="0 0 2 24"><rect x="0" y="0" width="1.5" height="1.5" fill="#a0a0a0"/><rect x="0" y="3" width="1.5" height="1.5" fill="#a0a0a0"/><rect x="0" y="6" width="1.5" height="1.5" fill="#a0a0a0"/><rect x="0" y="9" width="1.5" height="1.5" fill="#a0a0a0"/><rect x="0" y="12" width="1.5" height="1.5" fill="#a0a0a0"/><rect x="0" y="15" width="1.5" height="1.5" fill="#a0a0a0"/><rect x="0" y="18" width="1.5" height="1.5" fill="#a0a0a0"/><rect x="0" y="21" width="1.5" height="1.5" fill="#a0a0a0"/></svg>
<div style="left:1px;top:155px;width:268px;height:19px;background:#dadada;border:1px solid #c6c6c6"></div>
<svg class="tx" width="1" height="1"><text x="2.5" y="169" font-size="11" fill="#000" textLength="57.5" lengthAdjust="spacing" >Combo View</text></svg>
<svg style="position:absolute;left:240px;top:159px;" width="30" height="14" viewBox="0 0 30 14"><rect x="3.5" y="2.5" width="5.5" height="5" fill="none" stroke="#000" stroke-width="1.3"/><rect x="0.7" y="5.5" width="5.5" height="5.2" fill="#dadada" stroke="#000" stroke-width="1.3"/><path d="M3.5 3h5.5M0.7 6h5.5" stroke="#000" stroke-width="2"/><path d="M16.5 3.5l7 7M23.5 3.5l-7 7" stroke="#000" stroke-width="1.7"/></svg>
<div style="left:1px;top:176px;width:54px;height:22px;background:#fff;border:1px solid #d9d9d9;border-bottom:none"></div>
<div style="left:54px;top:178px;width:47px;height:20px;background:#f0f0f0;border:1px solid #d9d9d9;border-bottom:none"></div>
<svg class="tx" width="1" height="1"><text x="12.5" y="191" font-size="11" fill="#000" textLength="28" lengthAdjust="spacing" >Model</text></svg>
<svg class="tx" width="1" height="1"><text x="65" y="192" font-size="11" fill="#000" textLength="25.5" lengthAdjust="spacing" >Tasks</text></svg>
<div style="left:3px;top:198px;width:262px;height:258px;background:#fff;border:1px solid #828790"></div>
<svg class="tx" width="1" height="1"><text x="8.5" y="215" font-size="12" fill="#000" textLength="100.5" lengthAdjust="spacing" >Labels &amp; Attributes</text></svg>
<div style="left:4px;top:199px;width:244px;height:240px;overflow:hidden">
</div>
<svg style="position:absolute;left:67px;top:223px;" width="17" height="15" viewBox="0 0 17 15"><path d="M1 4l5-3h10v10l-5 3H1z" fill="#3f6fb5"/><path d="M1 4l5-3h10l-5 3z" fill="#7fa7dd"/><path d="M11 4h0v10l5-3V1z" fill="#234f8f"/></svg>
<svg class="tx" width="1" height="1"><text x="89.5" y="235.8" font-size="12" fill="#000" letter-spacing="-0.67">R_0402_1005Metric_001</text></svg>
<svg style="position:absolute;left:67px;top:241px;" width="17" height="15" viewBox="0 0 17 15"><path d="M1 4l5-3h10v10l-5 3H1z" fill="#3f6fb5"/><path d="M1 4l5-3h10l-5 3z" fill="#7fa7dd"/><path d="M11 4h0v10l5-3V1z" fill="#234f8f"/></svg>
<svg class="tx" width="1" height="1"><text x="89.5" y="253.8" font-size="12" fill="#000" letter-spacing="-0.67">R_0402_1005Metric_002</text></svg>
<svg style="position:absolute;left:67px;top:259px;" width="17" height="15" viewBox="0 0 17 15"><path d="M1 4l5-3h10v10l-5 3H1z" fill="#3f6fb5"/><path d="M1 4l5-3h10l-5 3z" fill="#7fa7dd"/><path d="M11 4h0v10l5-3V1z" fill="#234f8f"/></svg>
<svg class="tx" width="1" height="1"><text x="89.5" y="271.8" font-size="12" fill="#000" letter-spacing="-0.67">R_0402_1005Metric_003</text></svg>
<svg style="position:absolute;left:67px;top:277px;" width="17" height="15" viewBox="0 0 17 15"><path d="M1 4l5-3h10v10l-5 3H1z" fill="#3f6fb5"/><path d="M1 4l5-3h10l-5 3z" fill="#7fa7dd"/><path d="M11 4h0v10l5-3V1z" fill="#234f8f"/></svg>
<svg class="tx" width="1" height="1"><text x="89.5" y="289.8" font-size="12" fill="#000" letter-spacing="-0.45">QFN-24-1EP_5x5mm_Pitch0.65</text></svg>
<svg style="position:absolute;left:47px;top:295px;" width="17" height="15" viewBox="0 0 17 15"><path d="M1 4l5-3h10v10l-5 3H1z" fill="#9a9a9a"/><path d="M1 4l5-3h10l-5 3z" fill="#c8c8c8"/><path d="M11 4h0v10l5-3V1z" fill="#7a7a7a"/></svg>
<svg class="tx" width="1" height="1"><text x="69.5" y="307.8" font-size="12" fill="#8f8f8f" letter-spacing="-0.55">USB_2_0_type_A_Dual_Stacked_jack</text></svg>
<svg style="position:absolute;left:47px;top:313px;" width="16" height="16" viewBox="0 0 16 16"><path d="M1 5l4-4 10 10-2 4z" fill="#29c4d0" stroke="#148a94" stroke-width="0.8"/><path d="M4 4l1.5-1.5M6 6l1.5-1.5M8 8l1.5-1.5M10 10l1.5-1.5" stroke="#148a94" stroke-width="0.8"/></svg>
<svg class="tx" width="1" height="1"><text x="69.5" y="325.8" font-size="12" fill="#000" letter-spacing="-0.3">Distance: 0.399469 mm</text></svg>
<svg style="position:absolute;left:47px;top:331px;" width="16" height="16" viewBox="0 0 16 16"><path d="M1 5l4-4 10 10-2 4z" fill="#29c4d0" stroke="#148a94" stroke-width="0.8"/><path d="M4 4l1.5-1.5M6 6l1.5-1.5M8 8l1.5-1.5M10 10l1.5-1.5" stroke="#148a94" stroke-width="0.8"/></svg>
<svg class="tx" width="1" height="1"><text x="69.5" y="343.8" font-size="12" fill="#000" letter-spacing="-0.3">Distance: 0.399918 mm</text></svg>
<svg style="position:absolute;left:47px;top:348px;" width="17" height="17" viewBox="0 0 17 17"><path d="M2 13l6-3 7 3-6 3z" fill="none" stroke="#c0141b" stroke-width="2"/><path d="M1 7l6-3 6 2v4l-6 3-6-2z" fill="#3f6fb5"/><path d="M1 7l6-3 6 2-6 3z" fill="#8fb0e0"/><circle cx="12" cy="5" r="4.5" fill="#0a2af0"/><path d="M9.5 5l2 2 3.5-4" fill="none" stroke="#fff" stroke-width="1.6"/></svg>
<svg class="tx" width="1" height="1"><text x="69.5" y="361.8" font-size="12" fill="#000" letter-spacing="-0.26">Board shield</text></svg>
<svg style="position:absolute;left:47px;top:367px;" width="17" height="15" viewBox="0 0 17 15"><path d="M1 8l8-6 7 3v3l-8 6-7-3z" fill="#8c8c8c"/><path d="M1 8l8-6 7 3-8 6z" fill="#b5b5b5"/><path d="M6 7l3-2.5 3 1.2-3 2.5z" fill="#777"/></svg>
<svg class="tx" width="1" height="1"><text x="69.5" y="379.8" font-size="12" fill="#8f8f8f" letter-spacing="-0.51">PCB Pocket</text></svg>
<svg style="position:absolute;left:67px;top:385px;" width="16" height="15" viewBox="0 0 16 15"><rect x="1" y="6" width="8" height="8" fill="#fff" stroke="#808080" stroke-width="1.3"/><circle cx="10" cy="5.5" r="4.3" fill="none" stroke="#808080" stroke-width="1.3"/></svg>
<svg class="tx" width="1" height="1"><text x="89.5" y="397.8" font-size="12" fill="#8f8f8f" letter-spacing="-0.22">PCB pocket sketch</text></svg>
<svg style="position:absolute;left:47px;top:403px;" width="17" height="15" viewBox="0 0 17 15"><path d="M1 8l8-6 7 3v3l-8 6-7-3z" fill="#8c8c8c"/><path d="M1 8l8-6 7 3-8 6z" fill="#b5b5b5"/><path d="M6 7l3-2.5 3 1.2-3 2.5z" fill="#777"/></svg>
<svg class="tx" width="1" height="1"><text x="69.5" y="415.8" font-size="12" fill="#8f8f8f" letter-spacing="-0.42">Passives Pocket</text></svg>
<svg style="position:absolute;left:67px;top:421px;" width="16" height="15" viewBox="0 0 16 15"><rect x="1" y="6" width="8" height="8" fill="#fff" stroke="#808080" stroke-width="1.3"/><circle cx="10" cy="5.5" r="4.3" fill="none" stroke="#808080" stroke-width="1.3"/></svg>
<svg class="tx" width="1" height="1"><text x="89.5" y="433.8" font-size="12" fill="#8f8f8f" letter-spacing="-0.39">Passives Pocket Sketch</text></svg>
<div style="left:248px;top:199px;width:16px;height:240px;background:#f0f0f0"></div>
<div style="left:248px;top:276px;width:16px;height:60px;background:#cdcdcd"></div>
<svg style="position:absolute;left:250px;top:202px;" width="12" height="12" viewBox="0 0 12 12"><path d="M2.5 7.5l3.5-3.5 3.5 3.5" fill="none" stroke="#606060" stroke-width="1.6"/></svg>
<svg style="position:absolute;left:250px;top:424px;" width="12" height="12" viewBox="0 0 12 12"><path d="M2.5 4.5l3.5 3.5 3.5-3.5" fill="none" stroke="#606060" stroke-width="1.6"/></svg>
<div style="left:4px;top:439px;width:244px;height:16px;background:#f0f0f0"></div>
<div style="left:248px;top:439px;width:16px;height:16px;background:#f0f0f0"></div>
<div style="left:21px;top:439px;width:181px;height:16px;background:#cdcdcd"></div>
<svg style="position:absolute;left:6px;top:441px;" width="12" height="12" viewBox="0 0 12 12"><path d="M7.5 2.5l-3.5 3.5 3.5 3.5" fill="none" stroke="#606060" stroke-width="1.6"/></svg>
<svg style="position:absolute;left:233px;top:441px;" width="12" height="12" viewBox="0 0 12 12"><path d="M4.5 2.5l3.5 3.5-3.5 3.5" fill="none" stroke="#606060" stroke-width="1.6"/></svg>
<svg style="position:absolute;left:28px;top:351px;" width="10" height="12" viewBox="0 0 10 12"><path d="M3 2l4 4-4 4" fill="none" stroke="#a0a0a0" stroke-width="1.3"/></svg>
<svg style="position:absolute;left:28px;top:370px;" width="12" height="10" viewBox="0 0 12 10"><path d="M2 3l4 4 4-4" fill="none" stroke="#404040" stroke-width="1.4"/></svg>
<svg style="position:absolute;left:28px;top:406px;" width="12" height="10" viewBox="0 0 12 10"><path d="M2 3l4 4 4-4" fill="none" stroke="#404040" stroke-width="1.4"/></svg>
<div style="left:3px;top:461px;width:261px;height:273px;background:#fff;border:1px solid #e3e3e3"></div>
<div style="left:5px;top:463px;width:256px;height:268px;background:#fff;border:1px solid #828790"></div>
<div style="left:105px;top:466px;width:1px;height:22px;background:#e5e5e5"></div>
<svg class="tx" width="1" height="1"><text x="10" y="480" font-size="12" fill="#000" textLength="45" lengthAdjust="spacing" >Property</text></svg>
<svg class="tx" width="1" height="1"><text x="110" y="480" font-size="12" fill="#000" textLength="28" lengthAdjust="spacing" >Value</text></svg>
<div style="left:1px;top:733px;width:265px;height:18px;background:#fff"></div>
<div style="left:0px;top:732px;width:266px;height:1px;background:#f0f0f0"></div>
<svg style="position:absolute;left:3px;top:732px;" width="95" height="17" viewBox="0 0 95 17"><path d="M0.5 1 C3 9 5 13 10 13.5 H42 C45 13 47 8 48 1" fill="#f0f0f0" stroke="#222" stroke-width="1"/><path d="M47 0.5 C50 9 52 14.5 57 14.5 H89 C92 14 93 9 94.5 0.5" fill="#fff" stroke="#222" stroke-width="1"/></svg>
<svg class="tx" width="1" height="1"><text x="14.5" y="744.5" font-size="12" fill="#000" textLength="21.5" lengthAdjust="spacing" >View</text></svg>
<svg class="tx" width="1" height="1"><text x="60" y="745.5" font-size="12" fill="#000" textLength="23" lengthAdjust="spacing" >Data</text></svg>
<svg style="position:absolute;left:273px;top:154px;overflow:hidden" width="1107" height="575" viewBox="0 0 1107 575"><defs><linearGradient id="bg" x1="0" y1="0" x2="0" y2="1"><stop offset="0" stop-color="#333364"/><stop offset="1" stop-color="#9898b0"/></linearGradient><linearGradient id="notch" x1="0" y1="0" x2="1" y2="0"><stop offset="0" stop-color="#2f4f94"/><stop offset="0.4" stop-color="#4063b8"/><stop offset="1" stop-color="#2a3f78"/></linearGradient><pattern id="rib" width="4.3" height="40" patternUnits="userSpaceOnUse"><rect width="4.3" height="40" fill="#141418"/><rect x="1.6" width="1.5" height="40" fill="#1c3290"/></pattern></defs><g transform="translate(-273,-154)"><rect x="273" y="154" width="1107" height="575" fill="url(#bg)"/><polygon points="804,197 1162,403.5 1162,472 798,682 440,475.5 440,407" fill="#818181" fill-opacity="0.72"/><line x1="804" y1="197" x2="804" y2="266" stroke="#3c3c40" stroke-width="1.2"/><line x1="804" y1="266" x2="440" y2="475.5" stroke="#3c3c40" stroke-width="1.2"/><line x1="804" y1="266" x2="1162" y2="472" stroke="#3c3c40" stroke-width="1.2"/><polygon points="491,383 498,392 776.5,552.5 776.5,572 498,412 491,402" fill="#3b5596"/><polygon points="823.6,581 854,598 854,618 823.6,600" fill="#3b5596"/><path d="M491 402 Q492 410 498 412 L776.5 572" fill="none" stroke="#4a4a4a" stroke-width="1.2"/><path d="M823.6 600 L854 618" fill="none" stroke="#4a4a4a" stroke-width="1.2"/><line x1="498" y1="392" x2="498" y2="412" stroke="#555" stroke-width="1"/><path d="M776.5 552.5 C785 546 812 543 830 556 C838 563 834 575 823.6 581 L823.6 600 L826.9 576 C815 566 790 566 776.5 573 Z" fill="url(#notch)"/><path d="M776.5 573 C790 566 815 566 826.9 576" fill="none" stroke="#555" stroke-width="1.2"/><line x1="776.5" y1="552.5" x2="776.5" y2="573" stroke="#444" stroke-width="1"/><line x1="823.6" y1="581" x2="823.6" y2="600" stroke="#444" stroke-width="1"/><path d="M854 598 C951.8 562 1033.9 506.1 1135.5 436.4 L1135.5 458.4 C1033.9 528 951.8 584 854 619 Z" fill="url(#rib)" stroke="#111" stroke-width="1.2"/><path d="M1118 448 L1135.5 436.4 L1135.5 458.4 L1118 470 Z" fill="#151518"/><path d="M493 377 L750.7 227.7 C757 223 770 224 777 229.5 L1135.5 436.4 C1033.9 506.1 951.8 562 854 598 L823.6 581 C834 575 838 563 830 556 C812 543 785 546 776.5 552.5 L498 392 C488 389 488 380 493 377 Z" fill="#0a32a0"/><path d="M765.5 450.6 L921 482 L804 546 L782 547 L725 513.6 Z" fill="#4e648f" fill-opacity="0.7"/><path d="M890 536 L935 521 L942 540 L888 562 Z" fill="#4e648f" fill-opacity="0.55"/><path d="M1009 362.3 L1112 421.2 L1100 442 L1070 457 L1006 462 Z" fill="#4e648f" fill-opacity="0.7"/><path d="M882.5 380 L951 471 L940 474 Z" fill="#4e648f" fill-opacity="0.7"/><path d="M912 452 L932 477 L926 478 Z" fill="#4e648f" fill-opacity="0.7"/><path d="M990 470 L1075 450 L995 478 Z" fill="#4e648f" fill-opacity="0.6"/><path d="M1000 478 L1100 460 L1005 485 Z" fill="#4e648f" fill-opacity="0.5"/><path d="M780 545 L921 484 L800 550 Z" fill="#4e648f" fill-opacity="0.5"/><path d="M917.1 492.4 C920 478 940 471.7 954.5 471.7 C965 471.7 975 475 979.2 477.5 C983 474 988 474.5 991.4 475.3 C1000 476 1010 482 1016.6 486.5 C1022 489 1024 491 1022.9 493.3 C1022 497 1019 500 1016.6 502.3 L968 529.3 C962 533 950 533 943.7 530.2 L926.6 521.2 C921 518 921 512 922.5 514 C921 510 925 507 927.5 506.8 C920 505 916 498 917.1 492.4 Z" fill="url(#notch)"/><path d="M923 501.4 C930 494 945 492 954.5 492.4 C965 492.4 975 495 979.2 498 C983 495 990 495 995 496 C1003 497 1010 499 1016.6 502.3 L968 529.3 C962 533 950 533 943.7 530.2 L926.6 521.2 C921 518 921 512 922.5 514 C921 510 925 507 927.5 506.8 C922 506 921 503 923 501.4 Z" fill="#7e7e88"/><path d="M923 501.4 C930 494 945 492 954.5 492.4 C965 492.4 975 495 979.2 498 C983 495 990 495 995 496 C1003 497 1010 499 1016.6 502.3" fill="none" stroke="#555" stroke-width="1.1"/><path d="M979.2 477.5 L979.2 498 M1002 480 L1002 498 M1016.6 487 L1016.6 502" stroke="#444" stroke-width="1"/><path d="M917.1 492.4 C920 478 940 471.7 954.5 471.7 C965 471.7 975 475 979.2 477.5 C983 474 988 474.5 991.4 475.3 C1000 476 1010 482 1016.6 486.5 C1022 489 1024 491 1022.9 493.3 C1022 497 1019 500 1016.6 502.3 L968 529.3 C962 533 950 533 943.7 530.2 L926.6 521.2 C921 518 921 512 922.5 514 C921 510 925 507 927.5 506.8 C920 505 916 498 917.1 492.4 Z" fill="none" stroke="#151515" stroke-width="1.5"/><path d="M493 377 L750.7 227.7 C757 223 770 224 777 229.5 L1135.5 436.4 C1033.9 506.1 951.8 562 854 598 L823.6 581 C834 575 838 563 830 556 C812 543 785 546 776.5 552.5 L498 392 C488 389 488 380 493 377 Z" fill="none" stroke="#151515" stroke-width="1.6"/><line x1="804" y1="197" x2="440" y2="407" stroke="#151515" stroke-width="1.6" stroke-linecap="round"/><line x1="804" y1="197" x2="1162" y2="403.5" stroke="#151515" stroke-width="1.6" stroke-linecap="round"/><line x1="440" y1="407" x2="798" y2="613" stroke="#151515" stroke-width="1.6" stroke-linecap="round"/><line x1="798" y1="613" x2="1162" y2="403.5" stroke="#151515" stroke-width="1.6" stroke-linecap="round"/><line x1="440" y1="407" x2="440" y2="475.5" stroke="#151515" stroke-width="1.6" stroke-linecap="round"/><line x1="1162" y1="403.5" x2="1162" y2="472" stroke="#151515" stroke-width="1.6" stroke-linecap="round"/><line x1="798" y1="613" x2="798" y2="682" stroke="#151515" stroke-width="1.6" stroke-linecap="round"/><line x1="440" y1="475.5" x2="798" y2="682" stroke="#151515" stroke-width="1.6" stroke-linecap="round"/><line x1="798" y1="682" x2="1162" y2="472" stroke="#151515" stroke-width="1.6" stroke-linecap="round"/><line x1="517.5" y1="154" x2="517.5" y2="729" stroke="#3399ff" stroke-width="2"/><line x1="1114.5" y1="154" x2="1114.5" y2="729" stroke="#3399ff" stroke-width="2"/><line x1="816" y1="154" x2="816" y2="413.5" stroke="#3399ff" stroke-width="2"/><line x1="816" y1="413.5" x2="816" y2="601" stroke="#3399ff" stroke-width="2" stroke-dasharray="5,5"/><line x1="816" y1="601" x2="816" y2="729" stroke="#3399ff" stroke-width="2"/><line x1="273" y1="382.5" x2="670.6" y2="154" stroke="#3399ff" stroke-width="2"/><line x1="517.5" y1="242" x2="1114.5" y2="585" stroke="#3399ff" stroke-width="2"/><line x1="517.5" y1="585" x2="1114.5" y2="242" stroke="#3399ff" stroke-width="2"/><line x1="273" y1="444.5" x2="768" y2="729" stroke="#3399ff" stroke-width="2"/><line x1="961.4" y1="154" x2="1380" y2="394.6" stroke="#3399ff" stroke-width="2"/><line x1="864" y1="729" x2="1380" y2="432.4" stroke="#3399ff" stroke-width="2"/><text transform="matrix(0.644,-0.372,-0.12,1.0,527,272)" font-size="45" font-family="Liberation Serif" fill="#2a6ab0" fill-opacity="0.92" stroke="#2a6ab0" stroke-width="0.9" stroke-opacity="0.9">YZ_Plane</text><text transform="matrix(0.866,0.5,-0.5,0.866,541,239.5)" font-size="31" font-family="Liberation Serif" fill="#2a6ab0" fill-opacity="0.92" stroke="#2a6ab0" stroke-width="0.9" stroke-opacity="0.9">YZ_Axis</text><text transform="matrix(0.786,-0.4535,0,1,525,569.3)" font-size="38.8" font-family="Liberation Serif" fill="#2a6ab0" fill-opacity="0.92" stroke="#2a6ab0" stroke-width="0.9" stroke-opacity="0.9">Y_Axis</text><text transform="matrix(0.866,0.5,-0.5,0.866,817,100.5)" font-size="31" font-family="Liberation Serif" fill="#2a6ab0" fill-opacity="0.92" stroke="#2a6ab0" stroke-width="0.9" stroke-opacity="0.9">XY_Plane</text><text transform="matrix(0,-1,-1,-0.5,826,751.5)" font-size="35" font-family="Liberation Serif" fill="#111">Z_Axis</text><text x="447" y="314" font-size="18" font-family="Liberation Serif" fill="#fff" stroke="#fff" stroke-width="0.35">0.40 mm</text><path d="M440.3 331 L440.3 318.6 L452.4 311.5 L452.4 324" fill="none" stroke="#fff" stroke-width="2.3"/><path d="M436 326.5l9 9M445 326.5l-9 9M448 319.5l9 9M457 319.5l-9 9" stroke="#fff" stroke-width="0.9"/></g></svg>
<svg style="position:absolute;left:273px;top:154px;overflow:hidden" width="1107" height="575" viewBox="0 0 1107 575"><g transform="translate(-273,-154)"><path d="M1288 171 L1297 162 L1306 171 Z" fill="#e4e8ef"/><path d="M1288 303 L1297 311 L1306 303 Z" fill="#e4e8ef"/><path d="M1231 228 L1222 237 L1231 246 Z" fill="#e4e8ef"/><path d="M1363 228 L1371 237 L1363 246 Z" fill="#e4e8ef"/><path d="M1276 170 C1262 174 1252 182 1247 190" fill="none" stroke="#e4e8ef" stroke-width="5"/><path d="M1242 194 L1243 182 L1253 189 Z" fill="#e4e8ef"/><path d="M1318 170 C1332 174 1342 182 1347 190" fill="none" stroke="#e4e8ef" stroke-width="5"/><path d="M1352 194 L1351 182 L1341 189 Z" fill="#e4e8ef"/><defs><radialGradient id="ncg" cx="0.5" cy="0.5" r="0.6"><stop offset="0" stop-color="#f8f9fb"/><stop offset="0.8" stop-color="#e6e9ef"/><stop offset="1" stop-color="#d0d4dc"/></radialGradient></defs><path d="M1297 195 C1312 195 1337 203 1340 215 C1343 230 1340 258 1332 268 C1322 280 1305 284 1297 284 C1289 284 1268 280 1260 268 C1253 258 1251 230 1254 215 C1257 203 1282 195 1297 195 Z" fill="url(#ncg)"/><path d="M1297 238 L1297 282 M1297 238 L1256 212 M1297 238 L1338 212" stroke="#dde2ea" stroke-width="7" fill="none"/><circle cx="1297" cy="238" r="10" fill="#f4f5f8"/><text transform="matrix(0.9,0.45,-0.3,0.5,1287,205)" font-size="12" font-family="Liberation Sans" font-style="italic" fill="#555">Top</text><text transform="matrix(0.9,0.48,0,1,1264,252)" font-size="12" font-family="Liberation Sans" font-style="italic" fill="#555">Front</text><text transform="matrix(0.9,-0.48,0,1,1300,272)" font-size="12" font-family="Liberation Sans" font-style="italic" fill="#555">Right</text><path d="M1248 210 L1259 258" stroke="#1010e0" stroke-width="1.3"/><path d="M1259 258 L1297 293" stroke="#e01030" stroke-width="1.3"/><path d="M1259 258 L1290 240" stroke="#90e090" stroke-width="1"/><text x="1245" y="207" font-size="9" fill="#1010e0">Z</text><text x="1299" y="300" font-size="9" fill="#e01030">X</text><path d="M1325 288 L1336 284 L1347 288 L1347 302 L1336 306 L1325 302 Z" fill="#d8d8d8"/><path d="M1325 288 L1336 284 L1347 288 L1336 292 Z" fill="#f2f2f2"/><path d="M1336 292 L1347 288 L1347 302 L1336 306 Z" fill="#c4c4c4"/><path d="M1350 291 L1364 291 L1357 299 Z" fill="#404048"/><path d="M1351.5 699 L1351.5 683" stroke="#1a1a90" stroke-width="1.6"/><path d="M1349 686 L1351.5 679 L1354 686 Z" fill="#1a1a90"/><path d="M1351.5 699 L1361 693.5" stroke="#22902a" stroke-width="1.6"/><path d="M1358 692 L1364 692 L1361 696.5 Z" fill="#22902a"/><path d="M1351.5 699.5 L1365 707.5" stroke="#902020" stroke-width="1.6"/><path d="M1362 704.5 L1368 709.5 L1361.5 709 Z" fill="#902020"/><text x="1353.5" y="681.5" font-size="9.5" fill="#000">Z</text><text x="1365.5" y="693.5" font-size="9.5" fill="#000">Y</text><text x="1370.5" y="710.5" font-size="9.5" fill="#000">X</text></g></svg>
<div style="left:273px;top:729px;width:1107px;height:22px;background:#f0f0f0"></div>
<div style="left:275px;top:729px;width:114px;height:21px;background:#f0f0f0;border:1px solid #d9d9d9"></div>
<svg style="position:absolute;left:285px;top:732px;" width="17" height="16" viewBox="0 0 17 16"><path d="M0.5 0.5h8v3.5h-4.5v2.5h3.5v3h-3.5v6h-3.5z" fill="#d3151b"/><path d="M1 1h2v14h-2z" fill="#a00"/><g transform="translate(11.5,10)"><circle r="4" fill="#4a7fc0"/><circle r="1.6" fill="#fff"/><rect x="-1.2" y="-5.8" width="2.4" height="2.6" fill="#4a7fc0" transform="rotate(0)"/><rect x="-1.2" y="-5.8" width="2.4" height="2.6" fill="#4a7fc0" transform="rotate(45)"/><rect x="-1.2" y="-5.8" width="2.4" height="2.6" fill="#4a7fc0" transform="rotate(90)"/><rect x="-1.2" y="-5.8" width="2.4" height="2.6" fill="#4a7fc0" transform="rotate(135)"/><rect x="-1.2" y="-5.8" width="2.4" height="2.6" fill="#4a7fc0" transform="rotate(180)"/><rect x="-1.2" y="-5.8" width="2.4" height="2.6" fill="#4a7fc0" transform="rotate(225)"/><rect x="-1.2" y="-5.8" width="2.4" height="2.6" fill="#4a7fc0" transform="rotate(270)"/><rect x="-1.2" y="-5.8" width="2.4" height="2.6" fill="#4a7fc0" transform="rotate(315)"/></g></svg>
<svg class="tx" width="1" height="1"><text x="304" y="743" font-size="12" fill="#000" textLength="50.5" lengthAdjust="spacing" >Start page</text></svg>
<svg style="position:absolute;left:360px;top:732px;" width="15" height="15" viewBox="0 0 15 15"><rect x="0.5" y="0.5" width="14" height="14" rx="2" fill="#dcdcdc" stroke="#b0b0b0"/><path d="M4 4l7 7M11 4l-7 7" stroke="#fff" stroke-width="2.2"/></svg>
<div style="left:388px;top:729px;width:154px;height:21px;background:#f0f0f0;border:1px solid #d9d9d9"></div>
<svg style="position:absolute;left:398px;top:732px;" width="17" height="16" viewBox="0 0 17 16"><path d="M0.5 0.5h8v3.5h-4.5v2.5h3.5v3h-3.5v6h-3.5z" fill="#d3151b"/><path d="M1 1h2v14h-2z" fill="#a00"/><g transform="translate(11.5,10)"><circle r="4" fill="#4a7fc0"/><circle r="1.6" fill="#fff"/><rect x="-1.2" y="-5.8" width="2.4" height="2.6" fill="#4a7fc0" transform="rotate(0)"/><rect x="-1.2" y="-5.8" width="2.4" height="2.6" fill="#4a7fc0" transform="rotate(45)"/><rect x="-1.2" y="-5.8" width="2.4" height="2.6" fill="#4a7fc0" transform="rotate(90)"/><rect x="-1.2" y="-5.8" width="2.4" height="2.6" fill="#4a7fc0" transform="rotate(135)"/><rect x="-1.2" y="-5.8" width="2.4" height="2.6" fill="#4a7fc0" transform="rotate(180)"/><rect x="-1.2" y="-5.8" width="2.4" height="2.6" fill="#4a7fc0" transform="rotate(225)"/><rect x="-1.2" y="-5.8" width="2.4" height="2.6" fill="#4a7fc0" transform="rotate(270)"/><rect x="-1.2" y="-5.8" width="2.4" height="2.6" fill="#4a7fc0" transform="rotate(315)"/></g></svg>
<svg class="tx" width="1" height="1"><text x="417" y="743" font-size="12" fill="#000" textLength="89" lengthAdjust="spacing" >Doorbell Holder : 1</text></svg>
<svg style="position:absolute;left:513px;top:732px;" width="15" height="15" viewBox="0 0 15 15"><rect x="0.5" y="0.5" width="14" height="14" rx="2" fill="#dcdcdc" stroke="#b0b0b0"/><path d="M4 4l7 7M11 4l-7 7" stroke="#fff" stroke-width="2.2"/></svg>
<div style="left:541px;top:729px;width:136px;height:21px;background:#f0f0f0;border:1px solid #d9d9d9"></div>
<svg style="position:absolute;left:551px;top:732px;" width="17" height="16" viewBox="0 0 17 16"><path d="M0.5 0.5h8v3.5h-4.5v2.5h3.5v3h-3.5v6h-3.5z" fill="#d3151b"/><path d="M1 1h2v14h-2z" fill="#a00"/><g transform="translate(11.5,10)"><circle r="4" fill="#4a7fc0"/><circle r="1.6" fill="#fff"/><rect x="-1.2" y="-5.8" width="2.4" height="2.6" fill="#4a7fc0" transform="rotate(0)"/><rect x="-1.2" y="-5.8" width="2.4" height="2.6" fill="#4a7fc0" transform="rotate(45)"/><rect x="-1.2" y="-5.8" width="2.4" height="2.6" fill="#4a7fc0" transform="rotate(90)"/><rect x="-1.2" y="-5.8" width="2.4" height="2.6" fill="#4a7fc0" transform="rotate(135)"/><rect x="-1.2" y="-5.8" width="2.4" height="2.6" fill="#4a7fc0" transform="rotate(180)"/><rect x="-1.2" y="-5.8" width="2.4" height="2.6" fill="#4a7fc0" transform="rotate(225)"/><rect x="-1.2" y="-5.8" width="2.4" height="2.6" fill="#4a7fc0" transform="rotate(270)"/><rect x="-1.2" y="-5.8" width="2.4" height="2.6" fill="#4a7fc0" transform="rotate(315)"/></g></svg>
<svg class="tx" width="1" height="1"><text x="570" y="743" font-size="12" fill="#000" textLength="73" lengthAdjust="spacing" >Unnamed1 : 1*</text></svg>
<svg style="position:absolute;left:649px;top:732px;" width="15" height="15" viewBox="0 0 15 15"><rect x="0.5" y="0.5" width="14" height="14" rx="2" fill="#dcdcdc" stroke="#b0b0b0"/><path d="M4 4l7 7M11 4l-7 7" stroke="#fff" stroke-width="2.2"/></svg>
<div style="left:676px;top:728px;width:161px;height:23px;background:#fff;border:1px solid #d9d9d9;border-bottom:none"></div>
<svg style="position:absolute;left:690px;top:733px;" width="17" height="16" viewBox="0 0 17 16"><path d="M0.5 0.5h8v3.5h-4.5v2.5h3.5v3h-3.5v6h-3.5z" fill="#d3151b"/><path d="M1 1h2v14h-2z" fill="#a00"/><g transform="translate(11.5,10)"><circle r="4" fill="#4a7fc0"/><circle r="1.6" fill="#fff"/><rect x="-1.2" y="-5.8" width="2.4" height="2.6" fill="#4a7fc0" transform="rotate(0)"/><rect x="-1.2" y="-5.8" width="2.4" height="2.6" fill="#4a7fc0" transform="rotate(45)"/><rect x="-1.2" y="-5.8" width="2.4" height="2.6" fill="#4a7fc0" transform="rotate(90)"/><rect x="-1.2" y="-5.8" width="2.4" height="2.6" fill="#4a7fc0" transform="rotate(135)"/><rect x="-1.2" y="-5.8" width="2.4" height="2.6" fill="#4a7fc0" transform="rotate(180)"/><rect x="-1.2" y="-5.8" width="2.4" height="2.6" fill="#4a7fc0" transform="rotate(225)"/><rect x="-1.2" y="-5.8" width="2.4" height="2.6" fill="#4a7fc0" transform="rotate(270)"/><rect x="-1.2" y="-5.8" width="2.4" height="2.6" fill="#4a7fc0" transform="rotate(315)"/></g></svg>
<svg class="tx" width="1" height="1"><text x="709" y="744" font-size="12" fill="#000" textLength="96" lengthAdjust="spacing" >tomu_0.4_case : 1*</text></svg>
<svg style="position:absolute;left:810px;top:733px;" width="15" height="15" viewBox="0 0 15 15"><rect x="0.5" y="0.5" width="14" height="14" rx="2" fill="#e06040" stroke="#c04020"/><path d="M4 4l7 7M11 4l-7 7" stroke="#fff" stroke-width="2.2"/></svg>
<div style="left:1px;top:757px;width:1443px;height:19px;background:#dadada;border:1px solid #c6c6c6"></div>
<svg class="tx" width="1" height="1"><text x="2.5" y="771" font-size="11" fill="#000" textLength="72.5" lengthAdjust="spacing" >Python console</text></svg>
<svg style="position:absolute;left:1415px;top:760px;" width="30" height="14" viewBox="0 0 30 14"><rect x="3.5" y="2.5" width="5.5" height="5" fill="none" stroke="#000" stroke-width="1.3"/><rect x="0.7" y="5.5" width="5.5" height="5.2" fill="#dadada" stroke="#000" stroke-width="1.3"/><path d="M3.5 3h5.5M0.7 6h5.5" stroke="#000" stroke-width="2"/><path d="M16.5 3.5l7 7M23.5 3.5l-7 7" stroke="#000" stroke-width="1.7"/></svg>
<div style="left:1px;top:778px;width:1443px;height:104px;background:#fff;border:1px solid #828790"></div>
<div style="left:1426px;top:779px;width:17px;height:102px;background:#f0f0f0"></div>
<div style="left:1427px;top:846px;width:15px;height:18px;background:#cdcdcd"></div>
<svg style="position:absolute;left:1428px;top:782px;" width="12" height="12" viewBox="0 0 12 12"><path d="M2.5 7.5l3.5-3.5 3.5 3.5" fill="none" stroke="#606060" stroke-width="1.6"/></svg>
<svg style="position:absolute;left:1428px;top:866px;" width="12" height="12" viewBox="0 0 12 12"><path d="M2.5 4.5l3.5 3.5 3.5-3.5" fill="none" stroke="#606060" stroke-width="1.6"/></svg>
<svg class="tx" width="1" height="1"><text x="6.6" y="790.5" font-size="13.33" font-family="Liberation Mono"><tspan fill="#a0a0a4">&gt;&gt;&gt; </tspan><tspan fill="#2a2a2a">Gui</tspan><tspan fill="#a0a0a4">.</tspan><tspan fill="#2a2a2a">getDocument</tspan><tspan fill="#a0a0a4">(</tspan><tspan fill="#ff1010">"tomu_0_4_case"</tspan><tspan fill="#a0a0a4">)</tspan><tspan fill="#a0a0a4">.</tspan><tspan fill="#2a2a2a">getObject</tspan><tspan fill="#a0a0a4">(</tspan><tspan fill="#ff1010">"Pad004"</tspan><tspan fill="#a0a0a4">)</tspan><tspan fill="#a0a0a4">.</tspan><tspan fill="#2a2a2a">Visibility</tspan><tspan fill="#a0a0a4">=</tspan><tspan fill="#2a2a2a">False</tspan></text></svg>
<svg class="tx" width="1" height="1"><text x="6.6" y="806.5" font-size="13.33" font-family="Liberation Mono"><tspan fill="#a0a0a4">&gt;&gt;&gt; </tspan><tspan fill="#2a2a2a">Gui</tspan><tspan fill="#a0a0a4">.</tspan><tspan fill="#2a2a2a">getDocument</tspan><tspan fill="#a0a0a4">(</tspan><tspan fill="#ff1010">"tomu_0_4_case"</tspan><tspan fill="#a0a0a4">)</tspan><tspan fill="#a0a0a4">.</tspan><tspan fill="#2a2a2a">getObject</tspan><tspan fill="#a0a0a4">(</tspan><tspan fill="#ff1010">"Pad"</tspan><tspan fill="#a0a0a4">)</tspan><tspan fill="#a0a0a4">.</tspan><tspan fill="#2a2a2a">Visibility</tspan><tspan fill="#a0a0a4">=</tspan><tspan fill="#2a2a2a">True</tspan></text></svg>
<svg class="tx" width="1" height="1"><text x="6.6" y="822.5" font-size="13.33" font-family="Liberation Mono"><tspan fill="#a0a0a4">&gt;&gt;&gt; </tspan><tspan fill="#2a2a2a">FreeCAD</tspan><tspan fill="#a0a0a4">.</tspan><tspan fill="#2a2a2a">getDocument</tspan><tspan fill="#a0a0a4">(</tspan><tspan fill="#ff1010">"tomu_0_4_case"</tspan><tspan fill="#a0a0a4">)</tspan><tspan fill="#a0a0a4">.</tspan><tspan fill="#2a2a2a">getObject</tspan><tspan fill="#a0a0a4">(</tspan><tspan fill="#ff1010">"Pad"</tspan><tspan fill="#a0a0a4">)</tspan><tspan fill="#a0a0a4">.</tspan><tspan fill="#2a2a2a">Length2</tspan><tspan fill="#a0a0a4"> = </tspan><tspan fill="#ff1010">'1 mm'</tspan></text></svg>
<svg class="tx" width="1" height="1"><text x="6.6" y="838.5" font-size="13.33" font-family="Liberation Mono"><tspan fill="#a0a0a4">&gt;&gt;&gt; </tspan><tspan fill="#2a2a2a">FreeCAD</tspan><tspan fill="#a0a0a4">.</tspan><tspan fill="#2a2a2a">getDocument</tspan><tspan fill="#a0a0a4">(</tspan><tspan fill="#ff1010">"tomu_0_4_case"</tspan><tspan fill="#a0a0a4">)</tspan><tspan fill="#a0a0a4">.</tspan><tspan fill="#2a2a2a">getObject</tspan><tspan fill="#a0a0a4">(</tspan><tspan fill="#ff1010">"Pad"</tspan><tspan fill="#a0a0a4">)</tspan><tspan fill="#a0a0a4">.</tspan><tspan fill="#2a2a2a">Length2</tspan><tspan fill="#a0a0a4"> = </tspan><tspan fill="#ff1010">'10 mm'</tspan></text></svg>
<svg class="tx" width="1" height="1"><text x="6.6" y="854.5" font-size="13.33" font-family="Liberation Mono"><tspan fill="#a0a0a4">&gt;&gt;&gt; </tspan><tspan fill="#2a2a2a">FreeCAD</tspan><tspan fill="#a0a0a4">.</tspan><tspan fill="#2a2a2a">getDocument</tspan><tspan fill="#a0a0a4">(</tspan><tspan fill="#ff1010">"tomu_0_4_case"</tspan><tspan fill="#a0a0a4">)</tspan><tspan fill="#a0a0a4">.</tspan><tspan fill="#2a2a2a">getObject</tspan><tspan fill="#a0a0a4">(</tspan><tspan fill="#ff1010">"Pad"</tspan><tspan fill="#a0a0a4">)</tspan><tspan fill="#a0a0a4">.</tspan><tspan fill="#2a2a2a">Length2</tspan><tspan fill="#a0a0a4"> = </tspan><tspan fill="#ff1010">'100 mm'</tspan></text></svg>
<svg class="tx" width="1" height="1"><text x="6.6" y="870.5" font-size="13.33" font-family="Liberation Mono"><tspan fill="#a0a0a4">&gt;&gt;&gt;</tspan></text></svg>
<svg class="tx" width="1" height="1"><text x="7.2" y="901" font-size="12" fill="#000" textLength="402" lengthAdjust="spacing" >Preselected: Board shield - tomu_0_4_case.Pad.Face2 (5.5, -3.15655, -1.88272)</text></svg>
<div style="left:1298px;top:884px;width:1px;height:24px;background:#dcdcdc"></div>
<div style="left:1425px;top:884px;width:1px;height:24px;background:#dcdcdc"></div>
<svg style="position:absolute;left:1240px;top:888px;" width="12" height="18" viewBox="0 0 12 18"><rect x="1.5" y="1.5" width="9" height="14" rx="4.5" fill="none" stroke="#404040" stroke-width="1.3"/><path d="M6 4v4" stroke="#404040" stroke-width="1.3"/></svg>
<svg class="tx" width="1" height="1"><text x="1258" y="901" font-size="12" fill="#000" textLength="23" lengthAdjust="spacing" >CAD</text></svg>
<svg style="position:absolute;left:1282px;top:896px" width="9" height="5" viewBox="0 0 9 5"><path d="M0 0h9l-4.5 5z" fill="#000"/></svg>
<svg class="tx" width="1" height="1"><text x="1304" y="901" font-size="12" fill="#000" textLength="114" lengthAdjust="spacing" >26.24 mm x 13.61 mm</text></svg>
<svg style="position:absolute;left:1430px;top:896px;" width="12" height="12" viewBox="0 0 12 12"><rect x="9" y="1" width="1.5" height="1.5" fill="#b0b0b0"/><rect x="9" y="5" width="1.5" height="1.5" fill="#b0b0b0"/><rect x="5" y="5" width="1.5" height="1.5" fill="#b0b0b0"/><rect x="9" y="9" width="1.5" height="1.5" fill="#b0b0b0"/><rect x="5" y="9" width="1.5" height="1.5" fill="#b0b0b0"/><rect x="1" y="9" width="1.5" height="1.5" fill="#b0b0b0"/></svg>
<div style="left:1380px;top:154px;width:64px;height:597px;background:#f0f0f0"></div>
<div style="left:1384px;top:155px;width:60px;height:19px;background:#dadada;border:1px solid #c6c6c6;border-right:none"></div>
<svg class="tx" width="1" height="1"><text x="1386" y="169" font-size="11" fill="#000" textLength="36" lengthAdjust="spacing" >kicad ...</text></svg>
<svg style="position:absolute;left:1430px;top:158px;" width="14" height="14" viewBox="0 0 14 14"><rect x="3.5" y="2.5" width="5.5" height="5" fill="none" stroke="#000" stroke-width="1.3"/><rect x="0.7" y="5.5" width="5.5" height="5.2" fill="#dadada" stroke="#000" stroke-width="1.3"/><path d="M3.5 3h5.5M0.7 6h5.5" stroke="#000" stroke-width="2"/></svg>
<div style="left:1392px;top:181px;width:26px;height:26px;background:#e1e1e1;border:1px solid #adadad"></div>
<svg style="position:absolute;left:1398px;top:187px;" width="14" height="14" viewBox="0 0 14 14"><path d="M1 7l12-6v12z" fill="#808080"/></svg>
<div style="left:1424px;top:181px;width:21px;height:26px;background:#e1e1e1;border:1px solid #adadad"></div>
<svg style="position:absolute;left:1428px;top:184px;" width="17" height="18" viewBox="0 0 17 18"><rect x="0" y="0" width="14" height="14" fill="#f4f4f4" stroke="#ccc"/><rect x="2" y="14" width="15" height="3" fill="#555"/></svg>
<div style="left:1389px;top:220px;width:56px;height:20px;background:#fff;border:1px solid #7a7a7a;border-right:none"></div>
<div style="left:1389px;top:261px;width:56px;height:20px;background:#fff;border:1px solid #7a7a7a;border-right:none"></div>
<div style="left:1389px;top:302px;width:56px;height:20px;background:#fff;border:1px solid #7a7a7a;border-right:none"></div>
<div style="left:1389px;top:340px;width:56px;height:20px;background:#fff;border:1px solid #7a7a7a;border-right:none"></div>
<div style="left:1389px;top:381px;width:56px;height:20px;background:#fff;border:1px solid #7a7a7a;border-right:none"></div>
<div style="left:1389px;top:422px;width:56px;height:20px;background:#fff;border:1px solid #7a7a7a;border-right:none"></div>
<svg class="tx" width="1" height="1"><text x="1443" y="235" font-size="12" fill="#000" text-anchor="end">90</text></svg>
<svg class="tx" width="1" height="1"><text x="1443" y="276" font-size="12" fill="#000" text-anchor="end">90</text></svg>
<svg class="tx" width="1" height="1"><text x="1443" y="317" font-size="12" fill="#000" text-anchor="end">90</text></svg>
<svg class="tx" width="1" height="1"><text x="1421.5" y="355" font-size="11" fill="#000" textLength="21.5" lengthAdjust="spacing" >0.10</text></svg>
<svg class="tx" width="1" height="1"><text x="1421.5" y="396" font-size="11" fill="#000" textLength="21.5" lengthAdjust="spacing" >0.10</text></svg>
<svg class="tx" width="1" height="1"><text x="1421.5" y="437" font-size="11" fill="#000" textLength="21.5" lengthAdjust="spacing" >0.10</text></svg>
<div style="left:1389px;top:457px;width:56px;height:35px;background:#e1e1e1;border:1px solid #cfcfcf;border-right:none"></div>
<div style="left:1389px;top:496px;width:56px;height:34px;background:#e1e1e1;border:1px solid #cfcfcf;border-right:none"></div>
<div style="left:1389px;top:534px;width:56px;height:35px;background:#e1e1e1;border:1px solid #cfcfcf;border-right:none"></div>
<div style="left:1389px;top:573px;width:56px;height:34px;background:#e1e1e1;border:1px solid #cfcfcf;border-right:none"></div>
<div style="left:1389px;top:611px;width:56px;height:34px;background:#e1e1e1;border:1px solid #cfcfcf;border-right:none"></div>
<svg style="position:absolute;left:1404px;top:460px;" width="28" height="28" viewBox="0 0 28 28"><rect x="2" y="9" width="23" height="12" rx="1" fill="#fff" stroke="#555" stroke-width="0.8"/><rect x="5" y="21.5" width="4" height="5" fill="#22c030" stroke="#107a10" stroke-width="0.5"/><rect x="12" y="21.5" width="4" height="5" fill="#22c030" stroke="#107a10" stroke-width="0.5"/><rect x="19" y="21.5" width="4" height="5" fill="#22c030" stroke="#107a10" stroke-width="0.5"/><rect x="19" y="3.5" width="4" height="5" fill="#22c030" stroke="#107a10" stroke-width="0.5"/><path d="M4 9c1-6 8-8 13-5l1-2 3 7-7 0 2-2c-3-2-7-1-9 2z" fill="#44c030" stroke="#1f7a10" stroke-width="0.7" stroke-linejoin="round"/></svg>
<svg style="position:absolute;left:1404px;top:498px;" width="28" height="28" viewBox="0 0 28 28"><rect x="1" y="6" width="24" height="13" rx="1" fill="#3c3c3c" stroke="#222" stroke-width="0.6"/><rect x="4" y="2" width="4" height="4" fill="#eee" stroke="#555" stroke-width="0.5"/><rect x="11" y="2" width="4" height="4" fill="#eee" stroke="#555" stroke-width="0.5"/><rect x="18" y="2" width="4" height="4" fill="#eee" stroke="#555" stroke-width="0.5"/><path d="M13 9l4-2.5h9v10l-4 2.5h-9z" fill="#3f7fd0" stroke="#1c3c6c" stroke-width="0.6"/><path d="M13 9l4-2.5h9l-4 2.5z" fill="#8fb4e6"/><path d="M6 18c2 6 10 8 15 4l1 2 3-7-7 0 2 2c-3 3-8 2-11-2z" fill="#44c030" stroke="#1f7a10" stroke-width="0.7" stroke-linejoin="round"/></svg>
<svg style="position:absolute;left:1400px;top:534px;" width="36" height="36" viewBox="0 0 36 36"><path d="M2 22l20-9 12 6v4l-20 9-12-6z" fill="#d89a00" stroke="#7a5000" stroke-width="0.7"/><path d="M2 22l20-9 12 6-20 9z" fill="#f8d030" stroke="#7a5000" stroke-width="0.7"/><path d="M14 19l6-3 5 2.5-6 3z" fill="none" stroke="#c89000" stroke-width="0.8"/><path d="M3 6c2-4 9-5 13 0l1-2 3 7-7 0 2-2c-3-3-7-3-10-1z" fill="#44c030" stroke="#1f7a10" stroke-width="0.7" stroke-linejoin="round"/></svg>
<svg style="position:absolute;left:1405px;top:576px;" width="28" height="30" viewBox="0 0 28 30"><path d="M2 5c0-4 16-4 16 0v17c0 4-16 4-16 0z" fill="#e8d020" stroke="#6a5a00" stroke-width="0.7"/><ellipse cx="10" cy="5" rx="8" ry="3" fill="#f8f080" stroke="#6a5a00" stroke-width="0.7"/><path d="M9 20c3 5 11 6 15 2l1 2 2-7-7 0 2 2c-3 3-8 2-11-1z" fill="#44c030" stroke="#1f7a10" stroke-width="0.7" stroke-linejoin="round"/></svg>
<svg style="position:absolute;left:1404px;top:613px;" width="28" height="28" viewBox="0 0 28 28"><rect x="2" y="1" width="23" height="26" fill="#f4f4f4" stroke="#d0d0d0"/><path d="M4 6h19" stroke="#ddd" stroke-width="1.5"/><path d="M9 11l3-3 12 12-3 3z" fill="#f0c820" stroke="#333" stroke-width="0.9"/><path d="M21 23l3-3 1 4z" fill="#333"/><path d="M9 11l3-3 2 2-3 3z" fill="#888"/></svg>
<div style="left:0px;top:0px;width:1445px;height:1px;background:#6eaff0"></div>
<div style="left:0px;top:0px;width:1px;height:912px;background:#6eaff0"></div>
<div style="left:1444px;top:0px;width:1px;height:912px;background:#6eaff0"></div>
<div style="left:0px;top:911px;width:1445px;height:1px;background:#6eaff0"></div>
</body></html>
